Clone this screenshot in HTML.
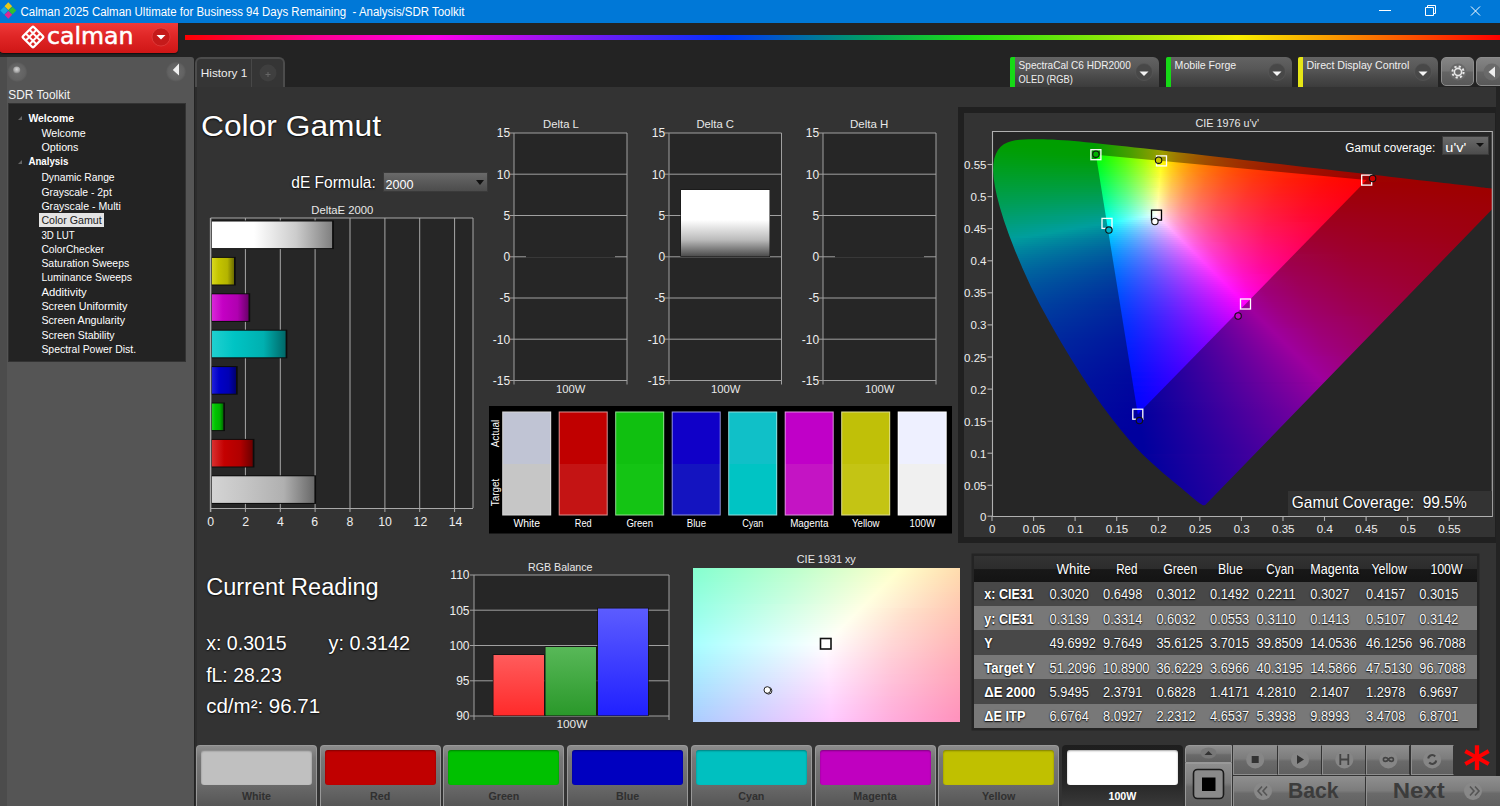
<!DOCTYPE html>
<html lang="en"><head><meta charset="utf-8"><title>Calman 2025 - Analysis/SDR Toolkit</title>
<style>
*{box-sizing:border-box;margin:0;padding:0}
html,body{width:1500px;height:806px;overflow:hidden;background:#222;font-family:"Liberation Sans","DejaVu Sans",sans-serif;color:#fff}
.a{position:absolute}
#root{position:relative;width:1500px;height:806px;overflow:hidden;background:#232323}
.t{position:absolute;white-space:nowrap;line-height:1}
svg{position:absolute;overflow:visible}
svg text{font-family:"Liberation Sans","DejaVu Sans",sans-serif}
.cn{display:inline-block;transform:scaleX(.86);transform-origin:0 50%}
.tc .cn{transform-origin:50% 50%}
.hv{text-shadow:0 0 1.5px #111,0 1px 1.5px #111}

</style></head>
<body>
<div id="root">
<div class="a" style="left:0;top:0;width:1500px;height:23px;background:#0078d7"></div>
<svg style="left:1.2px;top:2.800px" width="15.5" height="15.5" viewBox="0.500 0.500 17 17">
<rect x="5.5" y="1" width="6" height="6" transform="rotate(45 8.5 4)" fill="#e8c818"/>
<rect x="1" y="5.8" width="6" height="6" transform="rotate(45 4 8.8)" fill="#18a8e0"/>
<rect x="10" y="5.8" width="6" height="6" transform="rotate(45 13 8.8)" fill="#30c030"/>
<rect x="5.5" y="10.5" width="6" height="6" transform="rotate(45 8.5 13.5)" fill="#e02890"/>
</svg>
<svg style="left:1370px;top:0" width="130" height="23" viewBox="0 0 130 23" fill="none" stroke="#fff" stroke-width="1">
<path d="M9 10.5h12"/>
<path d="M55.5 7.5h8v8h-8z M57.5 7.5v-2h8v8h-2"/>
<path d="M101 6.500l9 9M110 6.500l-9 9"/>
</svg>
<div class="a" style="left:185px;top:35px;width:1315px;height:5px;background:linear-gradient(90deg,#f00 0%,#ff0090 10%,#ff00ea 19%,#0030ff 41%,#00a060 52%,#20e010 60%,#f8f000 80%,#f00 100%)"></div>
<div class="a" style="left:-2px;top:23px;width:180px;height:30px;border-radius:0 0 4px 6px;background:linear-gradient(180deg,#ee3a3a 0%,#e02626 45%,#cf1616 100%);box-shadow:0 1px 1px #111"></div>
<svg style="left:20px;top:24px" width="26" height="26" viewBox="0 0 26 26">
<g transform="translate(13 13) rotate(45)" fill="none" stroke="#fff" stroke-width="2.3">
<rect x="-7.6" y="-7.6" width="15.2" height="15.2" rx="1"/>
<path d="M-2.6 -7.6v15.2M2.6 -7.6v15.2M-7.6 -2.6h15.2M-7.6 2.6h15.2" stroke-width="1.9"/>
</g></svg>
<svg style="left:151px;top:27px" width="20" height="20" viewBox="0 0 20 20">
<circle cx="10" cy="10" r="9" fill="#c51a1a"/><circle cx="10" cy="10" r="9" fill="none" stroke="#e85050" stroke-opacity=".5"/>
<path d="M5.5 8h9l-4.5 4.6z" fill="#fff"/></svg>
<div class="a" style="left:0;top:57px;width:194px;height:749px;background:#555;border-radius:0 3px 0 0"></div>
<div class="a" style="left:0;top:57px;width:7px;height:749px;background:#4c4c4c"></div>
<svg style="left:0;top:57px" width="194" height="40" viewBox="0 57 194 40">
<defs><radialGradient id="kn" cx=".5" cy=".4" r=".6"><stop offset="0" stop-color="#d8d8d8"/><stop offset=".6" stop-color="#aaa"/><stop offset="1" stop-color="#777"/></radialGradient>
<radialGradient id="kr" cx=".5" cy=".5" r=".5"><stop offset="0" stop-color="#6c6c6c"/><stop offset=".8" stop-color="#626262"/><stop offset="1" stop-color="#575757"/></radialGradient></defs>
<circle cx="17.3" cy="72" r="10" fill="url(#kr)"/><circle cx="16.7" cy="70" r="3.6" fill="url(#kn)"/>
<circle cx="176" cy="71.7" r="10" fill="url(#kr)"/><path d="M179 63.5v12L172.800 70z" fill="#f0f0f0"/></svg>
<div class="a" style="left:8px;top:103px;width:178px;height:259px;background:#232323;border:1px solid #333"></div>
<div class="a" style="left:39px;top:213.0px;width:65px;height:14px;background:#e4e4e4"></div>
<div class="a" style="left:18px;top:116.0px;width:0;height:0;border-left:4px solid transparent;border-bottom:4px solid #666"></div>
<div class="a" style="left:18px;top:159.5px;width:0;height:0;border-left:4px solid transparent;border-bottom:4px solid #666"></div>
<div class="a" style="left:195px;top:57px;width:90px;height:32px;background:#353535;border:2px solid #4c4c4c;border-bottom:none;border-radius:6px 6px 0 0"></div>
<div class="a" style="left:251px;top:58px;width:1px;height:29px;background:#484848"></div>
<svg style="left:258px;top:63px" width="20" height="20" viewBox="0 0 20 20"><circle cx="10" cy="10" r="8.5" fill="#3f3f3f"/><path d="M7.5 11.5h5M10 9v5" stroke="#666" stroke-width="1"/></svg>
<div class="a" style="left:1010px;top:57px;width:149px;height:30px;border-radius:3px 6px 0 0;background:linear-gradient(180deg,#636363 0%,#575757 40%,#484848 70%,#3c3c3c 100%)"></div><div class="a" style="left:1010px;top:57px;width:5px;height:30px;background:#16d916;border-radius:2px 0 0 0"></div><svg style="left:1134px;top:62px" width="20" height="20" viewBox="0 0 20 20"><circle cx="10" cy="10" r="8.5" fill="#484848"/><circle cx="10" cy="10" r="8.5" fill="none" stroke="#5a5a5a" stroke-opacity=".6"/><path d="M5.5 9.5h9L10 14z" fill="#f4f4f4"/></svg>
<div class="a" style="left:1166px;top:57px;width:126px;height:30px;border-radius:3px 6px 0 0;background:linear-gradient(180deg,#636363 0%,#575757 40%,#484848 70%,#3c3c3c 100%)"></div><div class="a" style="left:1166px;top:57px;width:5px;height:30px;background:#16d916;border-radius:2px 0 0 0"></div><svg style="left:1267px;top:62px" width="20" height="20" viewBox="0 0 20 20"><circle cx="10" cy="10" r="8.5" fill="#484848"/><circle cx="10" cy="10" r="8.5" fill="none" stroke="#5a5a5a" stroke-opacity=".6"/><path d="M5.5 9.5h9L10 14z" fill="#f4f4f4"/></svg>
<div class="a" style="left:1298px;top:57px;width:140px;height:30px;border-radius:3px 6px 0 0;background:linear-gradient(180deg,#636363 0%,#575757 40%,#484848 70%,#3c3c3c 100%)"></div><div class="a" style="left:1298px;top:57px;width:5px;height:30px;background:#e6e616;border-radius:2px 0 0 0"></div><svg style="left:1413px;top:62px" width="20" height="20" viewBox="0 0 20 20"><circle cx="10" cy="10" r="8.5" fill="#484848"/><circle cx="10" cy="10" r="8.5" fill="none" stroke="#5a5a5a" stroke-opacity=".6"/><path d="M5.5 9.5h9L10 14z" fill="#f4f4f4"/></svg>
<div class="a" style="left:1441px;top:57px;width:33px;height:29px;border-radius:5px;border:1px solid #8c8c8c;background:linear-gradient(180deg,#858585 0%,#747474 48%,#646464 52%,#585858 100%)"></div>
<svg style="left:1448px;top:62px" width="20" height="20" viewBox="0 0 20 20"><circle cx="10" cy="10" r="8.5" fill="#6a6a6a"/>
<g fill="none" stroke="#e8e8e8"><circle cx="10" cy="10" r="3.6" stroke-width="1.6"/><circle cx="10" cy="10" r="5.6" stroke-width="2" stroke-dasharray="2.2 2.2"/></g></svg>
<div class="a" style="left:1476px;top:57px;width:33px;height:29px;border-radius:5px;border:1px solid #8c8c8c;background:linear-gradient(180deg,#858585 0%,#747474 48%,#646464 52%,#585858 100%)"></div>
<svg style="left:1482px;top:62px" width="20" height="20" viewBox="0 0 20 20"><circle cx="10" cy="10" r="8.5" fill="#6a6a6a"/><path d="M13 4.5v11L6.5 10z" fill="#eee"/></svg>
<div class="a" style="left:195px;top:87px;width:1301px;height:653px;background:#333"></div>
<div class="a" style="left:195px;top:87px;width:2px;height:653px;background:#2c2c2c"></div>
<svg style="left:0;top:0" width="1500" height="806" viewBox="0 0 1500 806"><text x="20.5" y="15.5" font-size="12" fill="#fff" textLength="444.0" lengthAdjust="spacingAndGlyphs" xml:space="preserve">Calman 2025 Calman Ultimate for Business 94 Days Remaining  - Analysis/SDR Toolkit</text><text x="47.0" y="43.8" font-size="22.5" fill="#fff" textLength="86.5" lengthAdjust="spacingAndGlyphs" style="font-family:'DejaVu Sans','Liberation Sans',sans-serif" stroke="#fff" stroke-width="0.5">calman</text><text x="8.3" y="99.2" font-size="12" fill="#f4f4f4" textLength="61.7" lengthAdjust="spacingAndGlyphs">SDR Toolkit</text><text x="28.4" y="121.8" font-size="10.8" fill="#fff" font-weight="bold" textLength="45.6" lengthAdjust="spacingAndGlyphs">Welcome</text><text x="41.4" y="137.3" font-size="10.8" fill="#fff" textLength="44.4" lengthAdjust="spacingAndGlyphs">Welcome</text><text x="41.4" y="151.3" font-size="10.8" fill="#fff" textLength="37.1" lengthAdjust="spacingAndGlyphs">Options</text><text x="28.4" y="165.3" font-size="10.8" fill="#fff" font-weight="bold" textLength="40.0" lengthAdjust="spacingAndGlyphs">Analysis</text><text x="41.4" y="181.3" font-size="10.8" fill="#fff" textLength="73.2" lengthAdjust="spacingAndGlyphs">Dynamic Range</text><text x="41.4" y="195.8" font-size="10.8" fill="#fff" textLength="70.4" lengthAdjust="spacingAndGlyphs">Grayscale - 2pt</text><text x="41.4" y="209.8" font-size="10.8" fill="#fff" textLength="79.4" lengthAdjust="spacingAndGlyphs">Grayscale - Multi</text><text x="41.4" y="223.8" font-size="10.8" fill="#222" textLength="60.3" lengthAdjust="spacingAndGlyphs">Color Gamut</text><text x="41.4" y="238.8" font-size="10.8" fill="#fff" textLength="33.3" lengthAdjust="spacingAndGlyphs">3D LUT</text><text x="41.4" y="252.8" font-size="10.8" fill="#fff" textLength="62.8" lengthAdjust="spacingAndGlyphs">ColorChecker</text><text x="41.4" y="267.3" font-size="10.8" fill="#fff" textLength="87.8" lengthAdjust="spacingAndGlyphs">Saturation Sweeps</text><text x="41.4" y="281.3" font-size="10.8" fill="#fff" textLength="90.5" lengthAdjust="spacingAndGlyphs">Luminance Sweeps</text><text x="41.4" y="295.8" font-size="10.8" fill="#fff" textLength="45.4" lengthAdjust="spacingAndGlyphs">Additivity</text><text x="41.4" y="309.8" font-size="10.8" fill="#fff" textLength="86.0" lengthAdjust="spacingAndGlyphs">Screen Uniformity</text><text x="41.4" y="324.3" font-size="10.8" fill="#fff" textLength="83.6" lengthAdjust="spacingAndGlyphs">Screen Angularity</text><text x="41.4" y="338.8" font-size="10.8" fill="#fff" textLength="73.2" lengthAdjust="spacingAndGlyphs">Screen Stability</text><text x="41.4" y="353.3" font-size="10.8" fill="#fff" textLength="94.7" lengthAdjust="spacingAndGlyphs">Spectral Power Dist.</text><text x="200.8" y="76.5" font-size="11.5" fill="#eee" textLength="46.5" lengthAdjust="spacingAndGlyphs">History 1</text><text x="1018.6" y="68.6" font-size="10.5" fill="#f0f0f0" textLength="112.2" lengthAdjust="spacingAndGlyphs">SpectraCal C6 HDR2000</text><text x="1018.6" y="83.2" font-size="10.5" fill="#f0f0f0" textLength="54.2" lengthAdjust="spacingAndGlyphs">OLED (RGB)</text><text x="1174.6" y="68.6" font-size="10.5" fill="#f0f0f0" textLength="61.6" lengthAdjust="spacingAndGlyphs">Mobile Forge</text><text x="1306.6" y="68.6" font-size="10.5" fill="#f0f0f0" textLength="102.7" lengthAdjust="spacingAndGlyphs">Direct Display Control</text></svg><div class="a" style="left:383px;top:172px;width:105px;height:20px;background:linear-gradient(180deg,#6a6a6a 0%,#5a5a5a 50%,#4c4c4c 100%);border:1px solid #3a3a3a"></div>
<div class="a" style="left:476px;top:180px;width:0;height:0;border-left:4px solid transparent;border-right:4px solid transparent;border-top:5px solid #111"></div>
<svg style="left:0;top:0" width="1500" height="806" viewBox="0 0 1500 806"><defs><linearGradient id="bw" x1="0" y1="0" x2="1" y2="0"><stop offset="0" stop-color="#fff"/><stop offset="0.35" stop-color="#fff"/><stop offset="0.7" stop-color="#ccc"/><stop offset="1" stop-color="#808080"/></linearGradient><linearGradient id="by" x1="0" y1="0" x2="1" y2="0"><stop offset="0" stop-color="#d8d820"/><stop offset="0.3" stop-color="#c4c400"/><stop offset="0.7" stop-color="#b4b400"/><stop offset="1" stop-color="#6c6c00"/></linearGradient><linearGradient id="bm" x1="0" y1="0" x2="1" y2="0"><stop offset="0" stop-color="#d828d8"/><stop offset="0.3" stop-color="#c400c4"/><stop offset="0.7" stop-color="#b000b0"/><stop offset="1" stop-color="#6a006a"/></linearGradient><linearGradient id="bc" x1="0" y1="0" x2="1" y2="0"><stop offset="0" stop-color="#20d0d0"/><stop offset="0.3" stop-color="#00c4c4"/><stop offset="0.7" stop-color="#00b0b0"/><stop offset="1" stop-color="#006868"/></linearGradient><linearGradient id="bb" x1="0" y1="0" x2="1" y2="0"><stop offset="0" stop-color="#2020d8"/><stop offset="0.3" stop-color="#0000c8"/><stop offset="0.7" stop-color="#0000b4"/><stop offset="1" stop-color="#00006c"/></linearGradient><linearGradient id="bg" x1="0" y1="0" x2="1" y2="0"><stop offset="0" stop-color="#20d020"/><stop offset="0.3" stop-color="#00c400"/><stop offset="0.7" stop-color="#00b000"/><stop offset="1" stop-color="#006c00"/></linearGradient><linearGradient id="br" x1="0" y1="0" x2="1" y2="0"><stop offset="0" stop-color="#d83030"/><stop offset="0.3" stop-color="#c40000"/><stop offset="0.7" stop-color="#b00000"/><stop offset="1" stop-color="#6c0000"/></linearGradient><linearGradient id="bgr" x1="0" y1="0" x2="1" y2="0"><stop offset="0" stop-color="#d4d4d4"/><stop offset="0.3" stop-color="#c6c6c6"/><stop offset="0.7" stop-color="#b0b0b0"/><stop offset="1" stop-color="#686868"/></linearGradient><linearGradient id="dc" x1="0" y1="0" x2="0" y2="1"><stop offset="0" stop-color="#fff"/><stop offset="0.45" stop-color="#fff"/><stop offset="0.75" stop-color="#bbb"/><stop offset="1" stop-color="#4a4a4a"/></linearGradient><linearGradient id="rr" x1="0" y1="0" x2="0" y2="1"><stop offset="0" stop-color="#ff5c5c"/><stop offset="1" stop-color="#ff2a2a"/></linearGradient><linearGradient id="rg" x1="0" y1="0" x2="0" y2="1"><stop offset="0" stop-color="#58b858"/><stop offset="1" stop-color="#2a982a"/></linearGradient><linearGradient id="rb" x1="0" y1="0" x2="0" y2="1"><stop offset="0" stop-color="#5c5cff"/><stop offset="1" stop-color="#2020ff"/></linearGradient></defs><rect x="210.6" y="218" width="262.4" height="290" fill="#262626"/><path d="M210.6 218 V512" stroke="#a8a8a8" stroke-width="1.5"/><path d="M245.4 218 V512" stroke="#a8a8a8" stroke-width="1"/><path d="M280.3 218 V512" stroke="#a8a8a8" stroke-width="1"/><path d="M315.1 218 V512" stroke="#a8a8a8" stroke-width="1"/><path d="M350.0 218 V512" stroke="#a8a8a8" stroke-width="1"/><path d="M384.9 218 V512" stroke="#a8a8a8" stroke-width="1"/><path d="M419.7 218 V512" stroke="#a8a8a8" stroke-width="1"/><path d="M454.6 218 V512" stroke="#a8a8a8" stroke-width="1"/><path d="M473.0 218V508" stroke="#a8a8a8" stroke-width="1"/><path d="M210.6 218.0H473" stroke="#a8a8a8" stroke-width="1"/><path d="M210.6 508.5H473" stroke="#a8a8a8" stroke-width="1"/><rect x="211.8" y="220.5" width="122.0" height="28.6" fill="#0c0c0c" /><rect x="211.9" y="221.5" width="120.2" height="26.6" fill="url(#bw)"/><rect x="211.8" y="256.9" width="23.9" height="28.6" fill="#0c0c0c" /><rect x="211.9" y="257.9" width="22.1" height="26.6" fill="url(#by)"/><rect x="211.8" y="293.3" width="38.4" height="28.6" fill="#0c0c0c" /><rect x="211.9" y="294.3" width="36.6" height="26.6" fill="url(#bm)"/><rect x="211.8" y="329.7" width="75.5" height="28.6" fill="#0c0c0c" /><rect x="211.9" y="330.7" width="73.7" height="26.6" fill="url(#bc)"/><rect x="211.8" y="366.1" width="25.9" height="28.6" fill="#0c0c0c" /><rect x="211.9" y="367.1" width="24.1" height="26.6" fill="url(#bb)"/><rect x="211.8" y="402.5" width="13.2" height="28.6" fill="#0c0c0c" /><rect x="211.9" y="403.5" width="11.4" height="26.6" fill="url(#bg)"/><rect x="211.8" y="438.9" width="42.6" height="28.6" fill="#0c0c0c" /><rect x="211.9" y="439.9" width="40.8" height="26.6" fill="url(#br)"/><rect x="211.8" y="475.3" width="104.3" height="28.6" fill="#0c0c0c" /><rect x="211.9" y="476.3" width="102.5" height="26.6" fill="url(#bgr)"/><rect x="514.0" y="133.0" width="113.0" height="247.5" fill="#262626"/><path d="M510.0 133.0H627.0" stroke="#a0a0a0" stroke-width="1"/><path d="M510.0 174.2H627.0" stroke="#a0a0a0" stroke-width="1"/><path d="M510.0 215.5H627.0" stroke="#a0a0a0" stroke-width="1"/><path d="M510.0 256.8H627.0" stroke="#a0a0a0" stroke-width="1"/><path d="M510.0 298.0H627.0" stroke="#a0a0a0" stroke-width="1"/><path d="M510.0 339.2H627.0" stroke="#a0a0a0" stroke-width="1"/><path d="M510.0 380.5H627.0" stroke="#a0a0a0" stroke-width="1"/><path d="M514.0 133.0V384.5 M627.0 133.0V384.5" stroke="#a0a0a0" stroke-width="1"/><rect x="526.0" y="256" width="89.0" height="1.5" fill="#262626"/><rect x="669.0" y="133.0" width="112.5" height="247.5" fill="#262626"/><path d="M665.0 133.0H781.5" stroke="#a0a0a0" stroke-width="1"/><path d="M665.0 174.2H781.5" stroke="#a0a0a0" stroke-width="1"/><path d="M665.0 215.5H781.5" stroke="#a0a0a0" stroke-width="1"/><path d="M665.0 256.8H781.5" stroke="#a0a0a0" stroke-width="1"/><path d="M665.0 298.0H781.5" stroke="#a0a0a0" stroke-width="1"/><path d="M665.0 339.2H781.5" stroke="#a0a0a0" stroke-width="1"/><path d="M665.0 380.5H781.5" stroke="#a0a0a0" stroke-width="1"/><path d="M669.0 133.0V384.5 M781.5 133.0V384.5" stroke="#a0a0a0" stroke-width="1"/><rect x="680.5" y="189.5" width="89.5" height="67.5" fill="#111"/><rect x="681" y="190" width="88.5" height="66.5" fill="url(#dc)"/><rect x="823.0" y="133.0" width="113.0" height="247.5" fill="#262626"/><path d="M819.0 133.0H936.0" stroke="#a0a0a0" stroke-width="1"/><path d="M819.0 174.2H936.0" stroke="#a0a0a0" stroke-width="1"/><path d="M819.0 215.5H936.0" stroke="#a0a0a0" stroke-width="1"/><path d="M819.0 256.8H936.0" stroke="#a0a0a0" stroke-width="1"/><path d="M819.0 298.0H936.0" stroke="#a0a0a0" stroke-width="1"/><path d="M819.0 339.2H936.0" stroke="#a0a0a0" stroke-width="1"/><path d="M819.0 380.5H936.0" stroke="#a0a0a0" stroke-width="1"/><path d="M823.0 133.0V384.5 M936.0 133.0V384.5" stroke="#a0a0a0" stroke-width="1"/><rect x="835.0" y="256" width="89.0" height="1.5" fill="#262626"/><rect x="489" y="406" width="463" height="127.5" fill="#000"/><rect x="502.2" y="411.5" width="49" height="104" fill="#d8d8d8"/><rect x="503.2" y="412.5" width="47" height="51.5" fill="#c0c4d4"/><rect x="503.2" y="464" width="47" height="50.5" fill="#c6c6c6"/><rect x="558.7" y="411.5" width="49" height="104" fill="#e09090"/><rect x="559.7" y="412.5" width="47" height="51.5" fill="#c00000"/><rect x="559.7" y="464" width="47" height="50.5" fill="#c41414"/><rect x="615.2" y="411.5" width="49" height="104" fill="#90e090"/><rect x="616.2" y="412.5" width="47" height="51.5" fill="#10c010"/><rect x="616.2" y="464" width="47" height="50.5" fill="#14c414"/><rect x="671.7" y="411.5" width="49" height="104" fill="#9090e0"/><rect x="672.7" y="412.5" width="47" height="51.5" fill="#1000c8"/><rect x="672.7" y="464" width="47" height="50.5" fill="#1414c0"/><rect x="728.2" y="411.5" width="49" height="104" fill="#90e0e0"/><rect x="729.2" y="412.5" width="47" height="51.5" fill="#10c0c8"/><rect x="729.2" y="464" width="47" height="50.5" fill="#00c4c4"/><rect x="784.7" y="411.5" width="49" height="104" fill="#e090e0"/><rect x="785.7" y="412.5" width="47" height="51.5" fill="#c000c8"/><rect x="785.7" y="464" width="47" height="50.5" fill="#c414c4"/><rect x="841.2" y="411.5" width="49" height="104" fill="#e0e090"/><rect x="842.2" y="412.5" width="47" height="51.5" fill="#c0c008"/><rect x="842.2" y="464" width="47" height="50.5" fill="#c4c414"/><rect x="897.7" y="411.5" width="49" height="104" fill="#fff"/><rect x="898.7" y="412.5" width="47" height="51.5" fill="#eef0ff"/><rect x="898.7" y="464" width="47" height="50.5" fill="#f0f0f0"/><rect x="474" y="575" width="195" height="141" fill="#262626"/><path d="M470.0 575.0H669.0" stroke="#a0a0a0" stroke-width="1"/><path d="M470.0 610.2H669.0" stroke="#a0a0a0" stroke-width="1"/><path d="M470.0 645.5H669.0" stroke="#a0a0a0" stroke-width="1"/><path d="M470.0 680.8H669.0" stroke="#a0a0a0" stroke-width="1"/><path d="M470.0 716.0H669.0" stroke="#a0a0a0" stroke-width="1"/><path d="M474.0 575.0V720.0 M669.0 575.0V720.0" stroke="#a0a0a0" stroke-width="1"/><rect x="492.8" y="654.3" width="51.9" height="61.7" fill="#111"/><rect x="493.5" y="655.0" width="50.5" height="60.5" fill="url(#rr)"/><rect x="544.8" y="646.3" width="51.9" height="69.7" fill="#111"/><rect x="545.5" y="647.0" width="50.5" height="68.5" fill="url(#rg)"/><rect x="597.3" y="607.8" width="51.4" height="108.2" fill="#111"/><rect x="598.0" y="608.5" width="50.0" height="107.0" fill="url(#rb)"/></svg>
<svg style="left:0;top:0" width="1500" height="806" viewBox="0 0 1500 806"><text x="201.0" y="135.6" font-size="29" fill="#fff" textLength="180.0" lengthAdjust="spacingAndGlyphs" class="hv">Color Gamut</text><text x="291.3" y="187.8" font-size="15.6" fill="#fff" textLength="84.5" lengthAdjust="spacingAndGlyphs" class="hv">dE Formula:</text><text x="385.6" y="189.3" font-size="13.3" fill="#fff" textLength="28.0" lengthAdjust="spacingAndGlyphs">2000</text><text x="210.6" y="526.4" font-size="12.3" fill="#eee" text-anchor="middle">0</text><text x="245.7" y="526.4" font-size="12.3" fill="#eee" text-anchor="middle">2</text><text x="280.5" y="526.4" font-size="12.3" fill="#eee" text-anchor="middle">4</text><text x="314.7" y="526.4" font-size="12.3" fill="#eee" text-anchor="middle">6</text><text x="349.9" y="526.4" font-size="12.3" fill="#eee" text-anchor="middle">8</text><text x="385.0" y="526.4" font-size="12.3" fill="#eee" text-anchor="middle">10</text><text x="420.4" y="526.4" font-size="12.3" fill="#eee" text-anchor="middle">12</text><text x="455.5" y="526.4" font-size="12.3" fill="#eee" text-anchor="middle">14</text><text x="311.3" y="214.0" font-size="11.3" fill="#e8e8e8" textLength="62.0" lengthAdjust="spacingAndGlyphs">DeltaE 2000</text><text x="510.2" y="137.3" font-size="12" fill="#eee" text-anchor="end">15</text><text x="510.2" y="178.6" font-size="12" fill="#eee" text-anchor="end">10</text><text x="510.2" y="219.8" font-size="12" fill="#eee" text-anchor="end">5</text><text x="510.2" y="261.1" font-size="12" fill="#eee" text-anchor="end">0</text><text x="510.2" y="302.3" font-size="12" fill="#eee" text-anchor="end">-5</text><text x="510.2" y="343.6" font-size="12" fill="#eee" text-anchor="end">-10</text><text x="510.2" y="384.8" font-size="12" fill="#eee" text-anchor="end">-15</text><text x="543.1" y="128.4" font-size="11" fill="#e8e8e8" textLength="35.8" lengthAdjust="spacingAndGlyphs">Delta L</text><text x="556.1" y="393.4" font-size="11" fill="#e8e8e8" textLength="29.4" lengthAdjust="spacingAndGlyphs">100W</text><text x="665.2" y="137.3" font-size="12" fill="#eee" text-anchor="end">15</text><text x="665.2" y="178.6" font-size="12" fill="#eee" text-anchor="end">10</text><text x="665.2" y="219.8" font-size="12" fill="#eee" text-anchor="end">5</text><text x="665.2" y="261.1" font-size="12" fill="#eee" text-anchor="end">0</text><text x="665.2" y="302.3" font-size="12" fill="#eee" text-anchor="end">-5</text><text x="665.2" y="343.6" font-size="12" fill="#eee" text-anchor="end">-10</text><text x="665.2" y="384.8" font-size="12" fill="#eee" text-anchor="end">-15</text><text x="696.4" y="128.4" font-size="11" fill="#e8e8e8" textLength="37.6" lengthAdjust="spacingAndGlyphs">Delta C</text><text x="710.9" y="393.4" font-size="11" fill="#e8e8e8" textLength="29.4" lengthAdjust="spacingAndGlyphs">100W</text><text x="819.2" y="137.3" font-size="12" fill="#eee" text-anchor="end">15</text><text x="819.2" y="178.6" font-size="12" fill="#eee" text-anchor="end">10</text><text x="819.2" y="219.8" font-size="12" fill="#eee" text-anchor="end">5</text><text x="819.2" y="261.1" font-size="12" fill="#eee" text-anchor="end">0</text><text x="819.2" y="302.3" font-size="12" fill="#eee" text-anchor="end">-5</text><text x="819.2" y="343.6" font-size="12" fill="#eee" text-anchor="end">-10</text><text x="819.2" y="384.8" font-size="12" fill="#eee" text-anchor="end">-15</text><text x="850.0" y="128.4" font-size="11" fill="#e8e8e8" textLength="38.4" lengthAdjust="spacingAndGlyphs">Delta H</text><text x="865.1" y="393.4" font-size="11" fill="#e8e8e8" textLength="29.4" lengthAdjust="spacingAndGlyphs">100W</text><text x="513.4" y="526.8" font-size="10.6" fill="#fff" textLength="26.6" lengthAdjust="spacingAndGlyphs">White</text><text x="574.8" y="526.8" font-size="10.6" fill="#fff" textLength="16.8" lengthAdjust="spacingAndGlyphs">Red</text><text x="626.4" y="526.8" font-size="10.6" fill="#fff" textLength="26.6" lengthAdjust="spacingAndGlyphs">Green</text><text x="686.8" y="526.8" font-size="10.6" fill="#fff" textLength="19.3" lengthAdjust="spacingAndGlyphs">Blue</text><text x="742.2" y="526.8" font-size="10.6" fill="#fff" textLength="21.2" lengthAdjust="spacingAndGlyphs">Cyan</text><text x="790.2" y="526.8" font-size="10.6" fill="#fff" textLength="38.2" lengthAdjust="spacingAndGlyphs">Magenta</text><text x="852.0" y="526.8" font-size="10.6" fill="#fff" textLength="27.6" lengthAdjust="spacingAndGlyphs">Yellow</text><text x="909.6" y="526.8" font-size="10.6" fill="#fff" textLength="25.6" lengthAdjust="spacingAndGlyphs">100W</text><text x="0.0" y="0.0" font-size="10.6" fill="#fff" text-anchor="middle" textLength="27.5" lengthAdjust="spacingAndGlyphs" transform="translate(499 433.5) rotate(-90)">Actual</text><text x="0.0" y="0.0" font-size="10.6" fill="#fff" text-anchor="middle" textLength="27.5" lengthAdjust="spacingAndGlyphs" transform="translate(499 492.5) rotate(-90)">Target</text><text x="469.5" y="579.3" font-size="12" fill="#eee" text-anchor="end">110</text><text x="469.5" y="614.5" font-size="12" fill="#eee" text-anchor="end">105</text><text x="469.5" y="649.8" font-size="12" fill="#eee" text-anchor="end">100</text><text x="469.5" y="685.0" font-size="12" fill="#eee" text-anchor="end">95</text><text x="469.5" y="720.3" font-size="12" fill="#eee" text-anchor="end">90</text><text x="528.0" y="570.7" font-size="11.2" fill="#e8e8e8" textLength="64.5" lengthAdjust="spacingAndGlyphs">RGB Balance</text><text x="556.4" y="727.7" font-size="11.2" fill="#e8e8e8" textLength="31.0" lengthAdjust="spacingAndGlyphs">100W</text><text x="206.2" y="595.0" font-size="23" fill="#fff" textLength="172.5" lengthAdjust="spacingAndGlyphs" class="hv">Current Reading</text><text x="206.2" y="650.0" font-size="19.8" fill="#fff" textLength="80.5" lengthAdjust="spacingAndGlyphs" class="hv">x: 0.3015</text><text x="328.5" y="650.0" font-size="19.8" fill="#fff" textLength="81.5" lengthAdjust="spacingAndGlyphs" class="hv">y: 0.3142</text><text x="206.2" y="682.3" font-size="19.8" fill="#fff" textLength="75.5" lengthAdjust="spacingAndGlyphs" class="hv">fL: 28.23</text><text x="206.2" y="713.3" font-size="19.8" fill="#fff" textLength="114.0" lengthAdjust="spacingAndGlyphs" class="hv">cd/m²: 96.71</text></svg><div class="a" style="left:958px;top:107px;width:538px;height:436px;background:#202020"></div>
<div class="a" style="left:964px;top:113px;width:531px;height:424px;background:#333"></div>
<div class="a" style="left:992px;top:131px;width:500px;height:386px;background:#262626"></div>
<div class="a" style="left:0;top:0;width:1492px;height:516px;overflow:hidden;clip-path:polygon(1205.5px 504.8px,1205.5px 504.8px,1205.4px 504.8px,1205.3px 504.8px,1205.3px 504.9px,1205.1px 504.9px,1205.0px 504.9px,1204.9px 504.9px,1204.8px 505.0px,1204.7px 505.1px,1204.6px 505.2px,1204.5px 505.2px,1204.3px 505.2px,1204.1px 505.2px,1203.8px 505.2px,1203.6px 505.2px,1203.3px 505.2px,1203.0px 505.2px,1202.7px 505.1px,1202.3px 504.9px,1201.7px 504.6px,1200.9px 504.1px,1200.0px 503.5px,1199.0px 502.8px,1197.9px 501.9px,1196.6px 500.9px,1195.1px 499.7px,1193.3px 498.3px,1191.5px 496.8px,1189.4px 495.0px,1187.1px 493.0px,1184.7px 490.9px,1181.9px 488.6px,1178.8px 486.1px,1175.4px 483.3px,1171.7px 480.2px,1167.6px 476.8px,1163.3px 473.2px,1158.6px 469.1px,1153.5px 464.6px,1148.0px 459.5px,1142.2px 453.9px,1135.9px 447.4px,1128.8px 439.5px,1120.7px 429.8px,1111.8px 418.6px,1102.4px 406.0px,1092.5px 391.9px,1082.1px 376.3px,1071.5px 359.5px,1060.8px 341.7px,1050.3px 323.5px,1040.1px 304.9px,1030.8px 286.5px,1022.6px 268.5px,1015.4px 251.4px,1009.2px 235.4px,1004.0px 220.8px,1000.0px 207.8px,997.0px 196.4px,994.9px 186.4px,993.6px 177.8px,993.1px 170.4px,993.4px 164.1px,994.3px 158.5px,995.9px 153.9px,998.0px 149.9px,1000.7px 146.8px,1003.8px 144.3px,1007.4px 142.5px,1011.2px 141.2px,1015.3px 140.3px,1019.7px 139.8px,1024.2px 139.4px,1028.9px 139.2px,1033.6px 139.2px,1038.3px 139.2px,1043.1px 139.3px,1047.9px 139.4px,1052.8px 139.6px,1057.9px 139.9px,1063.1px 140.2px,1068.4px 140.6px,1074.0px 141.1px,1079.7px 141.6px,1085.7px 142.2px,1091.9px 142.8px,1098.3px 143.4px,1105.0px 144.2px,1112.0px 144.9px,1119.3px 145.7px,1126.9px 146.5px,1134.7px 147.4px,1143.0px 148.3px,1151.5px 149.3px,1160.4px 150.3px,1169.6px 151.4px,1179.2px 152.5px,1189.2px 153.6px,1199.5px 154.8px,1210.1px 156.0px,1221.0px 157.3px,1232.3px 158.6px,1243.8px 159.9px,1255.6px 161.3px,1267.6px 162.7px,1279.7px 164.1px,1291.9px 165.5px,1304.0px 166.9px,1315.8px 168.2px,1327.4px 169.6px,1339.1px 170.9px,1350.5px 172.2px,1361.5px 173.5px,1372.0px 174.7px,1382.0px 175.8px,1391.5px 176.9px,1400.6px 178.0px,1409.1px 179.0px,1417.0px 179.9px,1424.5px 180.7px,1431.4px 181.5px,1437.8px 182.3px,1443.8px 183.0px,1449.4px 183.6px,1454.6px 184.2px,1459.6px 184.8px,1464.3px 185.3px,1468.7px 185.8px,1472.8px 186.3px,1476.7px 186.8px,1480.2px 187.2px,1481.9px 187.4px,1483.4px 187.5px,1484.9px 187.7px,1486.3px 187.9px,1487.7px 188.0px,1488.9px 188.2px,1490.1px 188.3px,1491.2px 188.4px,1492.2px 188.6px,1492.4px 188.6px,1492.4px 209.0px)">
<div class="a" style="left:1014px;top:138px;width:48px;height:2px;background:linear-gradient(90deg,#009e00 0.5px,#009e00 47.5px)"></div>
<div class="a" style="left:1006px;top:140px;width:81px;height:2px;background:linear-gradient(90deg,#009e00 0.5px,#009e00 80.5px)"></div>
<div class="a" style="left:1001px;top:142px;width:106px;height:2px;background:linear-gradient(90deg,#009e00 0.5px,#009e00 92.5px,#179e00 105.5px)"></div>
<div class="a" style="left:999px;top:144px;width:126px;height:2px;background:linear-gradient(90deg,#009e00 0.5px,#009e00 95.5px,#3c9e00 125.5px)"></div>
<div class="a" style="left:997px;top:146px;width:146px;height:2px;background:linear-gradient(90deg,#009e02 0.5px,#009e00 97.5px,#319e00 122.5px,#669e00 145.5px)"></div>
<div class="a" style="left:995px;top:148px;width:166px;height:2px;background:linear-gradient(90deg,#009e05 0.5px,#009e00 99.5px,#449e00 133.5px,#989e00 165.5px)"></div>
<div class="a" style="left:994px;top:150px;width:184px;height:2px;background:linear-gradient(90deg,#009e07 0.5px,#009e00 101.5px,#4b9e00 137.5px,#9e9e00 168.5px,#9e7900 183.5px)"></div>
<div class="a" style="left:993px;top:152px;width:202px;height:2px;background:linear-gradient(90deg,#009e0a 0.5px,#009e00 102.5px,#499e00 137.5px,#9e9d00 169.5px,#9e7a00 183.5px,#9e5c00 201.5px)"></div>
<div class="a" style="left:992px;top:154px;width:221px;height:2px;background:linear-gradient(90deg,#009e0d 0.5px,#009e01 103.5px,#469e00 137.5px,#9e9d00 170.5px,#9e8200 180.5px,#9e6b00 192.5px,#9e4600 220.5px)"></div>
<div class="a" style="left:992px;top:156px;width:238px;height:2px;background:linear-gradient(90deg,#009e0f 0.5px,#009e04 104.5px,#4b9e00 139.5px,#9d9e00 169.5px,#9e7b00 183.5px,#9e6000 198.5px,#9e4a00 216.5px,#9e3700 237.5px)"></div>
<div class="a" style="left:992px;top:158px;width:255px;height:2px;background:linear-gradient(90deg,#009e12 0.5px,#009e07 104.5px,#489e02 138.5px,#9d9e00 169.5px,#9e7600 185.5px,#9e5800 203.5px,#9e3f00 226.5px,#9e2b00 254.5px)"></div>
<div class="a" style="left:992px;top:160px;width:273px;height:2px;background:linear-gradient(90deg,#009e15 0.5px,#009e0b 104.5px,#489e06 138.5px,#9e9e00 169.5px,#9e7400 186.5px,#9e5100 208.5px,#9e3600 236.5px,#9e2100 272.5px)"></div>
<div class="a" style="left:992px;top:162px;width:290px;height:2px;background:linear-gradient(90deg,#009e17 0.5px,#009e0e 105.5px,#489e0a 138.5px,#9b9e05 168.5px,#9e6d00 189.5px,#9e4a00 214.5px,#9e2e00 247.5px,#9e1900 289.5px)"></div>
<div class="a" style="left:992px;top:164px;width:307px;height:2px;background:linear-gradient(90deg,#009e1a 0.5px,#009e12 105.5px,#489e0e 138.5px,#9c9e0a 168.5px,#9e6b04 190.5px,#9e4500 218.5px,#9e2800 256.5px,#9e1300 306.5px)"></div>
<div class="a" style="left:992px;top:166px;width:325px;height:2px;background:linear-gradient(90deg,#009e1d 0.5px,#009e16 105.5px,#459e13 137.5px,#9e9c0e 169.5px,#9e7f0a 180.5px,#9e6707 192.5px,#9e4001 223.5px,#9e2200 266.5px,#9e0d00 324.5px)"></div>
<div class="a" style="left:992px;top:168px;width:342px;height:2px;background:linear-gradient(90deg,#009e20 0.5px,#019e1a 106.5px,#489e17 138.5px,#9e9c13 169.5px,#9e7e0e 180.5px,#9e630a 194.5px,#9e4d06 210.5px,#9e3b03 228.5px,#9e1e00 275.5px,#9e0900 341.5px)"></div>
<div class="a" style="left:992px;top:170px;width:359px;height:2px;background:linear-gradient(90deg,#009e22 0.5px,#009e1d 106.5px,#4a9e1b 139.5px,#9e9e18 168.5px,#9e7d12 180.5px,#9e620d 194.5px,#9e4b09 211.5px,#9e3805 231.5px,#9e1a00 283.5px,#9e0500 358.5px)"></div>
<div class="a" style="left:992px;top:172px;width:377px;height:2px;background:linear-gradient(90deg,#009e25 0.5px,#009e21 106.5px,#479e1f 138.5px,#9e9e1d 168.5px,#9e7d16 180.5px,#9e6010 195.5px,#9e480b 213.5px,#9e3407 235.5px,#9e1600 293.5px,#9e0100 376.5px)"></div>
<div class="a" style="left:992px;top:174px;width:394px;height:2px;background:linear-gradient(90deg,#009e28 0.5px,#019e25 107.5px,#4a9e24 139.5px,#9e9d22 168.5px,#9e7a1a 181.5px,#9e5c13 197.5px,#9e440d 216.5px,#9e3008 240.5px,#9e1f04 270.5px,#9e1001 307.5px,#9e0000 393.5px)"></div>
<div class="a" style="left:992px;top:176px;width:412px;height:2px;background:linear-gradient(90deg,#009e2b 0.5px,#009e29 107.5px,#479e28 138.5px,#9e9d27 168.5px,#9e771d 182.5px,#9e5815 199.5px,#9e3f0f 220.5px,#9e2c0a 245.5px,#9e1a05 280.5px,#9e0b01 323.5px,#9e0000 377.5px,#9e0000 411.5px)"></div>
<div class="a" style="left:992px;top:178px;width:429px;height:2px;background:linear-gradient(90deg,#009e2e 0.5px,#009e2d 107.5px,#449e2d 137.5px,#9e9c2c 168.5px,#9e7621 182.5px,#9e5618 200.5px,#9e3d11 222.5px,#9e280b 250.5px,#9e1505 290.5px,#9e0701 340.5px,#9e0000 375.5px,#9e0000 428.5px)"></div>
<div class="a" style="left:992px;top:180px;width:446px;height:2px;background:linear-gradient(90deg,#009e31 0.5px,#019e32 108.5px,#479e32 138.5px,#9e9b31 168.5px,#9e7325 183.5px,#9e531a 202.5px,#9e3912 226.5px,#9e250c 255.5px,#9e1106 300.5px,#9e0301 358.5px,#9e0000 445.5px)"></div>
<div class="a" style="left:992px;top:182px;width:464px;height:2px;background:linear-gradient(90deg,#009e34 0.5px,#009e36 108.5px,#499e37 139.5px,#9e9e37 167.5px,#9e7529 182.5px,#9e521e 202.5px,#9e3715 227.5px,#9e220d 258.5px,#9e0f07 307.5px,#9e0002 371.5px,#9e0000 463.5px)"></div>
<div class="a" style="left:992px;top:184px;width:481px;height:2px;background:linear-gradient(90deg,#009e37 0.5px,#009e3a 108.5px,#469e3b 138.5px,#9e9d3d 167.5px,#9e722d 183.5px,#9e5020 203.5px,#9e3516 229.5px,#9e200f 262.5px,#9e0e08 308.5px,#9e0003 369.5px,#9e0000 480.5px)"></div>
<div class="a" style="left:992px;top:186px;width:498px;height:2px;background:linear-gradient(90deg,#009e3a 0.5px,#019e3e 109.5px,#499e40 139.5px,#9e9d42 167.5px,#9e7131 183.5px,#9e4e23 204.5px,#9e3318 231.5px,#9e1d10 266.5px,#9e0d09 310.5px,#9e0004 367.5px,#9e0000 497.5px)"></div>
<div class="a" style="left:992px;top:188px;width:504px;height:2px;background:linear-gradient(90deg,#009e3d 0.5px,#009e43 109.5px,#469e45 138.5px,#9e9c48 167.5px,#9e6e34 184.5px,#9e4c26 205.5px,#9e311a 233.5px,#9e1c11 268.5px,#9e0c0b 311.5px,#9e0006 365.5px,#9e0000 503.5px)"></div>
<div class="a" style="left:993px;top:190px;width:503px;height:2px;background:linear-gradient(90deg,#009e40 0.5px,#009e47 108.5px,#439e4a 136.5px,#9e9b4d 166.5px,#9e6e38 183.5px,#9e4c29 204.5px,#9e301d 232.5px,#9e1b13 267.5px,#9e0c0c 309.5px,#9e0007 362.5px,#9e0000 502.5px)"></div>
<div class="a" style="left:993px;top:192px;width:503px;height:2px;background:linear-gradient(90deg,#009e44 0.5px,#019e4c 109.5px,#4b9e50 139.5px,#9e9e54 165.5px,#9e8548 173.5px,#9e6f3e 182.5px,#9e4c2d 203.5px,#9e3120 230.5px,#9e1c16 265.5px,#9e0c0e 307.5px,#9e0008 360.5px,#9e0000 502.5px)"></div>
<div class="a" style="left:993px;top:194px;width:503px;height:2px;background:linear-gradient(90deg,#009e47 0.5px,#009e51 109.5px,#489e55 138.5px,#9e9e5a 165.5px,#9e7043 181.5px,#9e4d31 202.5px,#9e3123 229.5px,#9e1b18 265.5px,#9e0c10 306.5px,#9e000a 358.5px,#9e0001 502.5px)"></div>
<div class="a" style="left:994px;top:196px;width:502px;height:2px;background:linear-gradient(90deg,#009e4a 0.5px,#009e56 108.5px,#489e5b 137.5px,#9e9d60 164.5px,#9e7047 180.5px,#9e4c34 201.5px,#9e3125 228.5px,#9e1b19 264.5px,#9e0c11 305.5px,#9e000b 356.5px,#9e0002 501.5px)"></div>
<div class="a" style="left:994px;top:198px;width:502px;height:2px;background:linear-gradient(90deg,#009e4d 0.5px,#009e5a 108.5px,#459e60 136.5px,#9e9c66 164.5px,#9e6f4c 180.5px,#9e4b37 201.5px,#9e3028 228.5px,#9e1a1b 264.5px,#9e0c13 304.5px,#9e000c 354.5px,#9e0003 501.5px)"></div>
<div class="a" style="left:995px;top:200px;width:501px;height:2px;background:linear-gradient(90deg,#009e51 0.5px,#009e5f 108.5px,#459e65 135.5px,#9e9b6c 163.5px,#9e6e50 179.5px,#9e4b3b 200.5px,#9e2f2a 227.5px,#9e1a1d 263.5px,#9e000e 351.5px,#9e0003 500.5px)"></div>
<div class="a" style="left:995px;top:202px;width:501px;height:2px;background:linear-gradient(90deg,#009e54 0.5px,#009e64 108.5px,#459e6b 135.5px,#709e6f 149.5px,#9e9e74 162.5px,#9e9b72 163.5px,#9e6d55 179.5px,#9e4a3e 200.5px,#9e2f2d 227.5px,#9e191f 263.5px,#9e000f 349.5px,#9e0004 500.5px)"></div>
<div class="a" style="left:996px;top:204px;width:500px;height:2px;background:linear-gradient(90deg,#009e58 0.5px,#009e6a 107.5px,#479e71 135.5px,#9e9e7a 161.5px,#9e866a 168.5px,#9e6f5b 177.5px,#9e4b43 198.5px,#9e2f30 225.5px,#9e1a22 260.5px,#9e0011 346.5px,#9e0005 499.5px)"></div>
<div class="a" style="left:996px;top:206px;width:500px;height:2px;background:linear-gradient(90deg,#009e5b 0.5px,#009e6f 108.5px,#479e77 135.5px,#9e9d80 161.5px,#9e8570 168.5px,#9e6e60 177.5px,#9e4a46 198.5px,#9e2e33 225.5px,#9e1924 260.5px,#9e0012 344.5px,#9e0006 499.5px)"></div>
<div class="a" style="left:997px;top:208px;width:499px;height:2px;background:linear-gradient(90deg,#009e5f 0.5px,#009e74 107.5px,#479e7d 134.5px,#9e9c87 160.5px,#9e8575 167.5px,#9e6d64 176.5px,#9e494a 197.5px,#9e2e35 224.5px,#9e1926 259.5px,#9e0014 341.5px,#9e0006 498.5px)"></div>
<div class="a" style="left:998px;top:210px;width:496px;height:2px;background:linear-gradient(90deg,#009e62 0.5px,#009e7a 106.5px,#449e83 132.5px,#9e9c8d 159.5px,#9e847b 166.5px,#9e6d69 175.5px,#9e484d 196.5px,#9e2d38 223.5px,#9e1828 258.5px,#9e0015 338.5px,#9e0007 495.5px)"></div>
<div class="a" style="left:998px;top:212px;width:494px;height:2px;background:linear-gradient(90deg,#009e66 0.5px,#009e7f 107.5px,#479e8a 133.5px,#9d9e96 158.5px,#9e9b94 159.5px,#9e8381 166.5px,#9e6c6e 175.5px,#9e4952 195.5px,#9e2d3b 222.5px,#9e182a 257.5px,#9e0017 336.5px,#9e0008 493.5px)"></div>
<div class="a" style="left:999px;top:214px;width:492px;height:2px;background:linear-gradient(90deg,#009e6a 0.5px,#009e85 106.5px,#4a9e91 133.5px,#9e9e9e 157.5px,#9e8589 164.5px,#9e6d75 173.5px,#9e4a57 193.5px,#9e2e3f 219.5px,#9e182d 254.5px,#9e0019 333.5px,#9e0009 491.5px)"></div>
<div class="a" style="left:999px;top:216px;width:490px;height:2px;background:linear-gradient(90deg,#009e6e 0.5px,#009e8b 106.5px,#3a9e95 128.5px,#759e9e 146.5px,#9e969e 159.5px,#9e7f8a 166.5px,#9e6876 175.5px,#9e4658 195.5px,#9e2b40 222.5px,#9e162e 257.5px,#9e001a 331.5px,#9e000a 489.5px)"></div>
<div class="a" style="left:1000px;top:218px;width:487px;height:2px;background:linear-gradient(90deg,#009e72 0.5px,#009e80 58.5px,#009e91 106.5px,#4c9e9e 133.5px,#9e8e9e 160.5px,#9e6377 176.5px,#9e4258 197.5px,#9e2841 224.5px,#9e152f 259.5px,#9e001c 328.5px,#9e000b 486.5px)"></div>
<div class="a" style="left:1001px;top:220px;width:484px;height:2px;background:linear-gradient(90deg,#009e76 0.5px,#009e85 58.5px,#009e97 105.5px,#289e9e 120.5px,#9e869e 161.5px,#9e5e78 177.5px,#9e3e59 198.5px,#9e2642 225.5px,#9e1330 260.5px,#9e001e 325.5px,#9e000c 483.5px)"></div>
<div class="a" style="left:1001px;top:222px;width:482px;height:2px;background:linear-gradient(90deg,#009e79 0.5px,#009e8a 58.5px,#009e9d 105.5px,#43929e 131.5px,#9e7f9e 163.5px,#9e5877 180.5px,#9e3a5a 201.5px,#9e2343 228.5px,#9e1131 263.5px,#9e0020 323.5px,#9e000d 481.5px)"></div>
<div class="a" style="left:1002px;top:224px;width:479px;height:2px;background:linear-gradient(90deg,#009e7e 0.5px,#009e9e 94.5px,#01999e 105.5px,#4b8a9e 134.5px,#9e789e 164.5px,#9e5378 181.5px,#9e385b 202.5px,#9e2143 230.5px,#9e1032 265.5px,#9e0021 320.5px,#9e000d 478.5px)"></div>
<div class="a" style="left:1003px;top:226px;width:476px;height:2px;background:linear-gradient(90deg,#009e82 0.5px,#009e9e 81.5px,#00939e 104.5px,#4a849e 134.5px,#9e729e 165.5px,#9e4f78 182.5px,#9e345b 204.5px,#9e1e44 232.5px,#9e0e32 267.5px,#9e0023 318.5px,#9e000e 475.5px)"></div>
<div class="a" style="left:1003px;top:228px;width:474px;height:2px;background:linear-gradient(90deg,#009e86 0.5px,#009e9e 69.5px,#008e9e 104.5px,#457f9e 133.5px,#9e6c9e 167.5px,#9e4d7b 183.5px,#9e3560 202.5px,#9e224b 226.5px,#9e1239 256.5px,#9e0025 316.5px,#9e000f 473.5px)"></div>
<div class="a" style="left:1004px;top:230px;width:471px;height:2px;background:linear-gradient(90deg,#009e8a 0.5px,#009e9e 56.5px,#01889e 104.5px,#4c789e 136.5px,#9e679e 168.5px,#9e497c 184.5px,#9e3261 203.5px,#9e204c 227.5px,#9e113a 257.5px,#9e0027 313.5px,#9e001a 381.5px,#9e0010 470.5px)"></div>
<div class="a" style="left:1005px;top:232px;width:468px;height:2px;background:linear-gradient(90deg,#009e8f 0.5px,#009e9e 44.5px,#00849e 103.5px,#4c739e 136.5px,#9e619e 169.5px,#9e457c 185.5px,#9e3062 204.5px,#9e1e4d 228.5px,#9e0f3b 258.5px,#9e0029 310.5px,#9e001c 377.5px,#9e0011 467.5px)"></div>
<div class="a" style="left:1006px;top:234px;width:465px;height:2px;background:linear-gradient(90deg,#009e93 0.5px,#009e9e 31.5px,#007f9e 102.5px,#476f9e 134.5px,#9e5c9e 170.5px,#9e427d 186.5px,#9e2d63 205.5px,#9e1c4e 229.5px,#9e0e3c 259.5px,#9e002b 307.5px,#9e001d 374.5px,#9e0012 464.5px)"></div>
<div class="a" style="left:1006px;top:236px;width:463px;height:2px;background:linear-gradient(90deg,#009e97 0.5px,#009e9e 19.5px,#017a9e 103.5px,#4d699e 138.5px,#9e579e 172.5px,#9e3e7e 188.5px,#9e2b64 207.5px,#9e1a4f 231.5px,#9e0d3e 260.5px,#9e002d 305.5px,#9e001e 372.5px,#9e0013 462.5px)"></div>
<div class="a" style="left:1007px;top:238px;width:460px;height:2px;background:linear-gradient(90deg,#009e9c 0.5px,#00769e 102.5px,#4d659e 138.5px,#9e539e 173.5px,#9e3b7e 189.5px,#9e2865 208.5px,#9e1850 232.5px,#9e0c3f 261.5px,#9e002f 302.5px,#9e0020 369.5px,#9e0014 459.5px)"></div>
<div class="a" style="left:1008px;top:240px;width:457px;height:2px;background:linear-gradient(90deg,#009b9e 0.5px,#00729e 101.5px,#48629e 136.5px,#9e4e9e 174.5px,#9e387f 190.5px,#9e2666 209.5px,#9e1751 233.5px,#9e0a40 262.5px,#9e0031 299.5px,#9e0021 366.5px,#9e0015 456.5px)"></div>
<div class="a" style="left:1009px;top:242px;width:454px;height:2px;background:linear-gradient(90deg,#00979e 0.5px,#016e9e 101.5px,#4c5d9e 138.5px,#9e4a9e 175.5px,#9e3580 191.5px,#9e2467 210.5px,#9e1653 233.5px,#9e0a41 262.5px,#9e0034 296.5px,#9e0028 339.5px,#9e0016 453.5px)"></div>
<div class="a" style="left:1009px;top:244px;width:452px;height:2px;background:linear-gradient(90deg,#00939e 0.5px,#006b9e 101.5px,#4c599e 139.5px,#9e469e 177.5px,#9e3280 193.5px,#9e2268 212.5px,#9e1453 236.5px,#9e0842 264.5px,#9e0036 294.5px,#9e0029 340.5px,#9e0018 451.5px)"></div>
<div class="a" style="left:1010px;top:246px;width:450px;height:2px;background:linear-gradient(90deg,#008e9e 0.5px,#00679e 100.5px,#49569e 138.5px,#9e429e 178.5px,#9e2f81 194.5px,#9e1f69 213.5px,#9e1254 237.5px,#9e0743 265.5px,#9e0038 291.5px,#9e002a 340.5px,#9e0018 449.5px)"></div>
<div class="a" style="left:1011px;top:248px;width:447px;height:2px;background:linear-gradient(90deg,#008a9e 0.5px,#01639e 100.5px,#4d529e 140.5px,#9e3f9e 179.5px,#9e2c81 195.5px,#9e1d69 214.5px,#9e1155 237.5px,#9e0645 265.5px,#9e003b 288.5px,#9e002b 339.5px,#9e001a 446.5px)"></div>
<div class="a" style="left:1012px;top:250px;width:444px;height:2px;background:linear-gradient(90deg,#00869e 0.5px,#00609e 99.5px,#4d4e9e 140.5px,#9e3b9e 180.5px,#9e2a82 196.5px,#9e1b6a 215.5px,#9e0f56 238.5px,#9e0546 266.5px,#9e003d 285.5px,#9e002c 339.5px,#9e001b 443.5px)"></div>
<div class="a" style="left:1013px;top:252px;width:441px;height:2px;background:linear-gradient(90deg,#00839e 0.5px,#005d9e 98.5px,#4b4c9e 139.5px,#9e389e 181.5px,#9e2782 197.5px,#9e1a6b 216.5px,#9e0e57 239.5px,#9e0447 266.5px,#9e0040 282.5px,#9e002e 338.5px,#9e001c 440.5px)"></div>
<div class="a" style="left:1013px;top:254px;width:439px;height:2px;background:linear-gradient(90deg,#007f9e 0.5px,#015a9e 99.5px,#4e489e 142.5px,#9e349e 183.5px,#9e2583 199.5px,#9e186c 218.5px,#9e0c58 241.5px,#9e0348 268.5px,#9e002f 338.5px,#9e001d 438.5px)"></div>
<div class="a" style="left:1014px;top:256px;width:436px;height:2px;background:linear-gradient(90deg,#007c9e 0.5px,#00579e 98.5px,#4e459e 142.5px,#9e319e 184.5px,#9e2283 200.5px,#9e166c 219.5px,#9e0249 268.5px,#9e0030 337.5px,#9e001e 435.5px)"></div>
<div class="a" style="left:1015px;top:258px;width:433px;height:2px;background:linear-gradient(90deg,#00789e 0.5px,#00559e 97.5px,#4a439e 140.5px,#9e2e9e 185.5px,#9e2084 201.5px,#9e146d 220.5px,#9e014a 269.5px,#9e0031 337.5px,#9e001f 432.5px)"></div>
<div class="a" style="left:1016px;top:260px;width:430px;height:2px;background:linear-gradient(90deg,#00759e 0.5px,#01529e 97.5px,#4d3f9e 142.5px,#9e2b9e 186.5px,#9e1e84 202.5px,#9e126e 221.5px,#9e014b 269.5px,#9e0032 336.5px,#9e0020 429.5px)"></div>
<div class="a" style="left:1017px;top:262px;width:427px;height:2px;background:linear-gradient(90deg,#00729e 0.5px,#004f9e 96.5px,#4d3d9e 142.5px,#9e299e 187.5px,#9e1c84 203.5px,#9e116f 221.5px,#9e004d 269.5px,#9e0034 335.5px,#9e0022 426.5px)"></div>
<div class="a" style="left:1018px;top:264px;width:424px;height:2px;background:linear-gradient(90deg,#006f9e 0.5px,#004d9e 95.5px,#4b3a9e 141.5px,#9e269e 188.5px,#9e1a85 204.5px,#9e0f6f 223.5px,#9e004d 270.5px,#9e0035 335.5px,#9e0023 423.5px)"></div>
<div class="a" style="left:1019px;top:266px;width:421px;height:2px;background:linear-gradient(90deg,#006c9e 0.5px,#014a9e 95.5px,#4e379e 143.5px,#9e239e 189.5px,#9e1885 205.5px,#9e0e71 223.5px,#9e004f 270.5px,#9e0036 334.5px,#9e0024 420.5px)"></div>
<div class="a" style="left:1019px;top:268px;width:419px;height:2px;background:linear-gradient(90deg,#00699e 0.5px,#00489e 95.5px,#4d359e 144.5px,#9e219e 191.5px,#9e1686 207.5px,#9e0c71 225.5px,#9e0050 271.5px,#9e0038 333.5px,#9e0025 418.5px)"></div>
<div class="a" style="left:1020px;top:270px;width:416px;height:2px;background:linear-gradient(90deg,#00669e 0.5px,#00469e 94.5px,#4c339e 143.5px,#9e1e9e 192.5px,#9e1486 208.5px,#9e0b72 226.5px,#9e0059 257.5px,#9e0051 271.5px,#9e0039 332.5px,#9e0027 415.5px)"></div>
<div class="a" style="left:1021px;top:272px;width:413px;height:2px;background:linear-gradient(90deg,#00649e 0.5px,#01449e 94.5px,#4e309e 145.5px,#9e1c9e 193.5px,#9e1286 209.5px,#9e0972 227.5px,#9e005d 254.5px,#9e0052 272.5px,#9e003a 332.5px,#9e0028 412.5px)"></div>
<div class="a" style="left:1022px;top:274px;width:410px;height:2px;background:linear-gradient(90deg,#00619e 0.5px,#00429e 93.5px,#4e2e9e 145.5px,#9e1a9e 194.5px,#9e1087 210.5px,#9e0873 228.5px,#9e0060 251.5px,#9e0053 272.5px,#9e003b 331.5px,#9e0029 409.5px)"></div>
<div class="a" style="left:1023px;top:276px;width:407px;height:2px;background:linear-gradient(90deg,#005f9e 0.5px,#00409e 92.5px,#4c2c9e 144.5px,#9e189e 195.5px,#9e0774 228.5px,#9e0064 248.5px,#9e0055 272.5px,#9e003d 330.5px,#9e002b 406.5px)"></div>
<div class="a" style="left:1024px;top:278px;width:404px;height:2px;background:linear-gradient(90deg,#005c9e 0.5px,#013e9e 92.5px,#4e2a9e 145.5px,#9e169e 196.5px,#9e0575 229.5px,#9e0067 246.5px,#9e0056 272.5px,#9e003e 329.5px,#9e002c 403.5px)"></div>
<div class="a" style="left:1025px;top:280px;width:402px;height:2px;background:linear-gradient(90deg,#005a9e 0.5px,#003c9e 91.5px,#4d289e 145.5px,#9e149e 197.5px,#9e0475 230.5px,#9e0057 272.5px,#9e003f 328.5px,#9e002d 401.5px)"></div>
<div class="a" style="left:1026px;top:282px;width:399px;height:2px;background:linear-gradient(90deg,#00579e 0.5px,#003a9e 90.5px,#4c279e 144.5px,#9e129e 198.5px,#9e0377 230.5px,#9e0058 272.5px,#9e0041 327.5px,#9e002e 398.5px)"></div>
<div class="a" style="left:1027px;top:284px;width:396px;height:2px;background:linear-gradient(90deg,#00559e 0.5px,#01389e 90.5px,#4e249e 146.5px,#9e109e 199.5px,#9e0277 231.5px,#9e0059 272.5px,#9e0042 326.5px,#9e0030 395.5px)"></div>
<div class="a" style="left:1028px;top:286px;width:393px;height:2px;background:linear-gradient(90deg,#00539e 0.5px,#00379e 89.5px,#4e229e 146.5px,#9e0e9e 200.5px,#9e0178 232.5px,#9e005a 273.5px,#9e0043 325.5px,#9e0031 392.5px)"></div>
<div class="a" style="left:1029px;top:288px;width:390px;height:2px;background:linear-gradient(90deg,#00519e 0.5px,#00359e 88.5px,#4c219e 145.5px,#9e0c9e 201.5px,#9e0078 233.5px,#9e005b 273.5px,#9e0045 324.5px,#9e0033 389.5px)"></div>
<div class="a" style="left:1030px;top:290px;width:387px;height:2px;background:linear-gradient(90deg,#004f9e 0.5px,#01339e 88.5px,#4d1f9e 146.5px,#9e0a9e 202.5px,#9e007a 233.5px,#9e005d 272.5px,#9e0046 322.5px,#9e0034 386.5px)"></div>
<div class="a" style="left:1031px;top:292px;width:384px;height:2px;background:linear-gradient(90deg,#004d9e 0.5px,#00329e 87.5px,#4d1e9e 146.5px,#9e099e 203.5px,#9e007a 234.5px,#9e005e 272.5px,#9e0048 321.5px,#9e0036 383.5px)"></div>
<div class="a" style="left:1032px;top:294px;width:381px;height:2px;background:linear-gradient(90deg,#004b9e 0.5px,#00309e 86.5px,#4d1c9e 146.5px,#9e079e 204.5px,#9e007b 234.5px,#9e005f 272.5px,#9e0049 320.5px,#9e0037 380.5px)"></div>
<div class="a" style="left:1033px;top:296px;width:378px;height:2px;background:linear-gradient(90deg,#00499e 0.5px,#012f9e 86.5px,#4e1a9e 147.5px,#9e059e 205.5px,#9e007c 235.5px,#9e0060 272.5px,#9e004a 319.5px,#9e0039 377.5px)"></div>
<div class="a" style="left:1034px;top:298px;width:375px;height:2px;background:linear-gradient(90deg,#00479e 0.5px,#002d9e 85.5px,#4e199e 147.5px,#9e049e 206.5px,#9e007c 236.5px,#9e0062 272.5px,#9e004c 317.5px,#9e003a 374.5px)"></div>
<div class="a" style="left:1035px;top:300px;width:372px;height:2px;background:linear-gradient(90deg,#00459e 0.5px,#002c9e 84.5px,#4c189e 146.5px,#9e029e 207.5px,#9e007d 236.5px,#9e0063 272.5px,#9e004d 316.5px,#9e003c 371.5px)"></div>
<div class="a" style="left:1036px;top:302px;width:369px;height:2px;background:linear-gradient(90deg,#00439e 0.5px,#012a9e 84.5px,#4d169e 147.5px,#9e019e 208.5px,#9e007e 237.5px,#9e0064 272.5px,#9e004f 315.5px,#9e003e 368.5px)"></div>
<div class="a" style="left:1037px;top:304px;width:366px;height:2px;background:linear-gradient(90deg,#00419e 0.5px,#00299e 83.5px,#4d159e 147.5px,#9e009e 209.5px,#9e007e 238.5px,#9e0065 272.5px,#9e0050 314.5px,#9e003f 365.5px)"></div>
<div class="a" style="left:1038px;top:306px;width:363px;height:2px;background:linear-gradient(90deg,#00409e 0.5px,#00289e 82.5px,#4d149e 147.5px,#9e009e 210.5px,#9e007f 238.5px,#9e0067 271.5px,#9e0052 312.5px,#9e0041 362.5px)"></div>
<div class="a" style="left:1039px;top:308px;width:360px;height:2px;background:linear-gradient(90deg,#003e9e 0.5px,#01279e 82.5px,#4e129e 148.5px,#9e009e 211.5px,#9e0081 238.5px,#9e0068 271.5px,#9e0053 311.5px,#9e0043 359.5px)"></div>
<div class="a" style="left:1040px;top:310px;width:357px;height:2px;background:linear-gradient(90deg,#003c9e 0.5px,#00259e 81.5px,#8c009e 198.5px,#9e009e 212.5px,#9e0081 239.5px,#9e0069 271.5px,#9e0055 310.5px,#9e0044 356.5px)"></div>
<div class="a" style="left:1041px;top:312px;width:355px;height:2px;background:linear-gradient(90deg,#003b9e 0.5px,#00249e 80.5px,#87009e 195.5px,#9e009e 213.5px,#9e0081 240.5px,#9e006a 271.5px,#9e0056 309.5px,#9e0046 354.5px)"></div>
<div class="a" style="left:1042px;top:314px;width:352px;height:2px;background:linear-gradient(90deg,#00399e 0.5px,#01239e 80.5px,#82009e 192.5px,#9e009e 214.5px,#9e0082 240.5px,#9e006b 271.5px,#9e0058 308.5px,#9e0048 351.5px)"></div>
<div class="a" style="left:1043px;top:316px;width:349px;height:2px;background:linear-gradient(90deg,#00389e 0.5px,#00229e 79.5px,#7e009e 189.5px,#9e009e 215.5px,#9e0083 241.5px,#9e006c 271.5px,#9e0049 348.5px)"></div>
<div class="a" style="left:1044px;top:318px;width:346px;height:2px;background:linear-gradient(90deg,#00369e 0.5px,#00219e 78.5px,#79009e 186.5px,#9e009e 216.5px,#9e0084 241.5px,#9e006e 270.5px,#9e004b 345.5px)"></div>
<div class="a" style="left:1045px;top:320px;width:343px;height:2px;background:linear-gradient(90deg,#00359e 0.5px,#00209e 77.5px,#75009e 183.5px,#9e009e 217.5px,#9e0084 242.5px,#9e006f 270.5px,#9e004d 342.5px)"></div>
<div class="a" style="left:1046px;top:322px;width:340px;height:2px;background:linear-gradient(90deg,#00339e 0.5px,#001f9e 77.5px,#71009e 180.5px,#9e009e 218.5px,#9e0085 242.5px,#9e0071 269.5px,#9e004f 339.5px)"></div>
<div class="a" style="left:1048px;top:324px;width:336px;height:2px;background:linear-gradient(90deg,#00329e 0.5px,#001e9e 75.5px,#6d009e 176.5px,#9e009e 218.5px,#9e0086 242.5px,#9e0072 268.5px,#9e0051 335.5px)"></div>
<div class="a" style="left:1049px;top:326px;width:333px;height:2px;background:linear-gradient(90deg,#00309e 0.5px,#001d9e 74.5px,#69009e 173.5px,#9e009e 219.5px,#9e0087 242.5px,#9e0073 268.5px,#9e0053 332.5px)"></div>
<div class="a" style="left:1050px;top:328px;width:330px;height:2px;background:linear-gradient(90deg,#002f9e 0.5px,#001c9e 74.5px,#65009e 170.5px,#9e009e 220.5px,#9e0075 267.5px,#9e0055 329.5px)"></div>
<div class="a" style="left:1051px;top:330px;width:327px;height:2px;background:linear-gradient(90deg,#002e9e 0.5px,#001b9e 73.5px,#62009e 168.5px,#9e009e 221.5px,#9e0076 267.5px,#9e0057 326.5px)"></div>
<div class="a" style="left:1052px;top:332px;width:324px;height:2px;background:linear-gradient(90deg,#002c9e 0.5px,#001a9e 72.5px,#5f009e 165.5px,#9e009e 222.5px,#9e0077 266.5px,#9e0059 323.5px)"></div>
<div class="a" style="left:1053px;top:334px;width:321px;height:2px;background:linear-gradient(90deg,#002b9e 0.5px,#00199e 72.5px,#5b009e 162.5px,#9e009e 223.5px,#9e0078 266.5px,#9e005b 320.5px)"></div>
<div class="a" style="left:1054px;top:336px;width:318px;height:2px;background:linear-gradient(90deg,#002a9e 0.5px,#00189e 71.5px,#58009e 159.5px,#9e009e 224.5px,#9e007a 265.5px,#9e005d 317.5px)"></div>
<div class="a" style="left:1056px;top:338px;width:314px;height:2px;background:linear-gradient(90deg,#00289e 0.5px,#00179e 69.5px,#54009e 155.5px,#9e009e 224.5px,#9e007b 264.5px,#9e0060 313.5px)"></div>
<div class="a" style="left:1057px;top:340px;width:311px;height:2px;background:linear-gradient(90deg,#00279e 0.5px,#00169e 69.5px,#51009e 152.5px,#9e009e 225.5px,#9e007d 263.5px,#9e0062 310.5px)"></div>
<div class="a" style="left:1058px;top:342px;width:308px;height:2px;background:linear-gradient(90deg,#00269e 0.5px,#00159e 68.5px,#4e009e 149.5px,#9e009e 226.5px,#9e007e 263.5px,#9e0064 307.5px)"></div>
<div class="a" style="left:1059px;top:344px;width:305px;height:2px;background:linear-gradient(90deg,#00259e 0.5px,#00159e 67.5px,#4b009e 146.5px,#9e009e 227.5px,#9e007f 262.5px,#9e0066 304.5px)"></div>
<div class="a" style="left:1060px;top:346px;width:303px;height:2px;background:linear-gradient(90deg,#00249e 0.5px,#00149e 67.5px,#48009e 143.5px,#9e009e 228.5px,#9e0080 262.5px,#9e0068 302.5px)"></div>
<div class="a" style="left:1062px;top:348px;width:299px;height:2px;background:linear-gradient(90deg,#00239e 0.5px,#00139e 65.5px,#45009e 139.5px,#9e009e 228.5px,#9e0082 260.5px,#9e006b 298.5px)"></div>
<div class="a" style="left:1063px;top:350px;width:296px;height:2px;background:linear-gradient(90deg,#00229e 0.5px,#00129e 64.5px,#42009e 136.5px,#9e009e 229.5px,#9e0083 260.5px,#9e006d 295.5px)"></div>
<div class="a" style="left:1064px;top:352px;width:293px;height:2px;background:linear-gradient(90deg,#00219e 0.5px,#00119e 64.5px,#3f009e 133.5px,#9e009e 230.5px,#9e0085 259.5px,#9e0070 292.5px)"></div>
<div class="a" style="left:1065px;top:354px;width:290px;height:2px;background:linear-gradient(90deg,#001f9e 0.5px,#00119e 63.5px,#3c009e 130.5px,#9e009e 231.5px,#9e0087 258.5px,#9e0072 289.5px)"></div>
<div class="a" style="left:1066px;top:356px;width:287px;height:2px;background:linear-gradient(90deg,#001e9e 0.5px,#00109e 62.5px,#39009e 127.5px,#9e009e 232.5px,#9e0075 286.5px)"></div>
<div class="a" style="left:1068px;top:358px;width:283px;height:2px;background:linear-gradient(90deg,#001d9e 0.5px,#000f9e 61.5px,#37009e 123.5px,#9e009e 232.5px,#9e0078 282.5px)"></div>
<div class="a" style="left:1069px;top:360px;width:280px;height:2px;background:linear-gradient(90deg,#001c9e 0.5px,#000f9e 60.5px,#34009e 120.5px,#9e009e 233.5px,#9e007a 279.5px)"></div>
<div class="a" style="left:1070px;top:362px;width:277px;height:2px;background:linear-gradient(90deg,#001b9e 0.5px,#000e9e 59.5px,#32009e 118.5px,#9e009e 234.5px,#9e007d 276.5px)"></div>
<div class="a" style="left:1071px;top:364px;width:274px;height:2px;background:linear-gradient(90deg,#001a9e 0.5px,#000d9e 59.5px,#30009e 115.5px,#9e009e 235.5px,#9e0080 273.5px)"></div>
<div class="a" style="left:1073px;top:366px;width:270px;height:2px;background:linear-gradient(90deg,#00199e 0.5px,#000d9e 57.5px,#2d009e 111.5px,#9e009e 235.5px,#9e0083 269.5px)"></div>
<div class="a" style="left:1074px;top:368px;width:267px;height:2px;background:linear-gradient(90deg,#00189e 0.5px,#000c9e 56.5px,#2b009e 108.5px,#9e009e 236.5px,#9e0086 266.5px)"></div>
<div class="a" style="left:1075px;top:370px;width:264px;height:2px;background:linear-gradient(90deg,#00189e 0.5px,#010b9e 56.5px,#29009e 105.5px,#9e009e 237.5px,#9e0089 263.5px)"></div>
<div class="a" style="left:1076px;top:372px;width:261px;height:2px;background:linear-gradient(90deg,#00179e 0.5px,#000b9e 55.5px,#26009e 102.5px,#9e009e 238.5px,#9e008c 260.5px)"></div>
<div class="a" style="left:1078px;top:374px;width:257px;height:2px;background:linear-gradient(90deg,#00169e 0.5px,#000a9e 53.5px,#24009e 98.5px,#9e009e 238.5px,#9e008f 256.5px)"></div>
<div class="a" style="left:1079px;top:376px;width:254px;height:2px;background:linear-gradient(90deg,#00159e 0.5px,#01099e 53.5px,#22009e 95.5px,#9e009e 239.5px,#9e0092 253.5px)"></div>
<div class="a" style="left:1080px;top:378px;width:252px;height:2px;background:linear-gradient(90deg,#00149e 0.5px,#00099e 52.5px,#20009e 92.5px,#9e009e 240.5px,#9e0095 251.5px)"></div>
<div class="a" style="left:1082px;top:380px;width:248px;height:2px;background:linear-gradient(90deg,#00139e 0.5px,#00089e 50.5px,#1e009e 88.5px,#9e009e 240.5px,#9e0098 247.5px)"></div>
<div class="a" style="left:1083px;top:382px;width:245px;height:2px;background:linear-gradient(90deg,#00129e 0.5px,#01089e 50.5px,#1b009e 85.5px,#9e009c 244.5px)"></div>
<div class="a" style="left:1084px;top:384px;width:242px;height:2px;background:linear-gradient(90deg,#00119e 0.5px,#00079e 49.5px,#19009e 82.5px,#9d009e 241.5px)"></div>
<div class="a" style="left:1085px;top:386px;width:239px;height:2px;background:linear-gradient(90deg,#00119e 0.5px,#00079e 48.5px,#17009e 79.5px,#99009e 238.5px)"></div>
<div class="a" style="left:1087px;top:388px;width:235px;height:2px;background:linear-gradient(90deg,#00109e 0.5px,#01069e 47.5px,#15009e 75.5px,#96009e 234.5px)"></div>
<div class="a" style="left:1088px;top:390px;width:232px;height:2px;background:linear-gradient(90deg,#000f9e 0.5px,#00059e 46.5px,#14009e 72.5px,#93009e 231.5px)"></div>
<div class="a" style="left:1090px;top:392px;width:228px;height:2px;background:linear-gradient(90deg,#000e9e 0.5px,#00059e 44.5px,#12009e 68.5px,#8f009e 227.5px)"></div>
<div class="a" style="left:1091px;top:394px;width:225px;height:2px;background:linear-gradient(90deg,#000d9e 0.5px,#01049e 44.5px,#10009e 65.5px,#8c009e 224.5px)"></div>
<div class="a" style="left:1092px;top:396px;width:222px;height:2px;background:linear-gradient(90deg,#000d9e 0.5px,#00049e 43.5px,#0f009e 63.5px,#89009e 221.5px)"></div>
<div class="a" style="left:1094px;top:398px;width:218px;height:2px;background:linear-gradient(90deg,#000c9e 0.5px,#00049e 41.5px,#0d009e 59.5px,#86009e 217.5px)"></div>
<div class="a" style="left:1095px;top:400px;width:215px;height:2px;background:linear-gradient(90deg,#000b9e 0.5px,#01039e 41.5px,#83009e 214.5px)"></div>
<div class="a" style="left:1097px;top:402px;width:211px;height:2px;background:linear-gradient(90deg,#000a9e 0.5px,#00029e 39.5px,#80009e 210.5px)"></div>
<div class="a" style="left:1098px;top:404px;width:208px;height:2px;background:linear-gradient(90deg,#00099e 0.5px,#00029e 38.5px,#7d009e 207.5px)"></div>
<div class="a" style="left:1099px;top:406px;width:205px;height:2px;background:linear-gradient(90deg,#00099e 0.5px,#01019e 38.5px,#7a009e 204.5px)"></div>
<div class="a" style="left:1101px;top:408px;width:201px;height:2px;background:linear-gradient(90deg,#00089e 0.5px,#00019e 36.5px,#77009e 200.5px)"></div>
<div class="a" style="left:1102px;top:410px;width:198px;height:2px;background:linear-gradient(90deg,#00079e 0.5px,#00019e 35.5px,#74009e 197.5px)"></div>
<div class="a" style="left:1104px;top:412px;width:195px;height:2px;background:linear-gradient(90deg,#00079e 0.5px,#01009e 34.5px,#72009e 194.5px)"></div>
<div class="a" style="left:1105px;top:414px;width:192px;height:2px;background:linear-gradient(90deg,#00069e 0.5px,#00009e 33.5px,#70009e 191.5px)"></div>
<div class="a" style="left:1107px;top:416px;width:188px;height:2px;background:linear-gradient(90deg,#00059e 0.5px,#00009e 31.5px,#6d009e 187.5px)"></div>
<div class="a" style="left:1108px;top:418px;width:185px;height:2px;background:linear-gradient(90deg,#00059e 0.5px,#01009e 31.5px,#6b009e 184.5px)"></div>
<div class="a" style="left:1110px;top:420px;width:181px;height:2px;background:linear-gradient(90deg,#00049e 0.5px,#00009e 29.5px,#68009e 180.5px)"></div>
<div class="a" style="left:1111px;top:422px;width:178px;height:2px;background:linear-gradient(90deg,#00039e 0.5px,#00009e 28.5px,#66009e 177.5px)"></div>
<div class="a" style="left:1113px;top:424px;width:174px;height:2px;background:linear-gradient(90deg,#00039e 0.5px,#00009e 26.5px,#63009e 173.5px)"></div>
<div class="a" style="left:1115px;top:426px;width:170px;height:2px;background:linear-gradient(90deg,#00029e 0.5px,#00009e 25.5px,#61009e 169.5px)"></div>
<div class="a" style="left:1116px;top:428px;width:167px;height:2px;background:linear-gradient(90deg,#00019e 0.5px,#00009e 24.5px,#5e009e 166.5px)"></div>
<div class="a" style="left:1118px;top:430px;width:163px;height:2px;background:linear-gradient(90deg,#00019e 0.5px,#00009e 22.5px,#5c009e 162.5px)"></div>
<div class="a" style="left:1119px;top:432px;width:160px;height:2px;background:linear-gradient(90deg,#00009e 0.5px,#00009e 22.5px,#5a009e 159.5px)"></div>
<div class="a" style="left:1121px;top:434px;width:156px;height:2px;background:linear-gradient(90deg,#00009e 0.5px,#00009e 20.5px,#57009e 155.5px)"></div>
<div class="a" style="left:1123px;top:436px;width:152px;height:2px;background:linear-gradient(90deg,#00009e 0.5px,#00009e 18.5px,#55009e 151.5px)"></div>
<div class="a" style="left:1125px;top:438px;width:148px;height:2px;background:linear-gradient(90deg,#00009e 0.5px,#00009e 17.5px,#53009e 147.5px)"></div>
<div class="a" style="left:1126px;top:440px;width:145px;height:2px;background:linear-gradient(90deg,#00009e 0.5px,#00009e 16.5px,#51009e 144.5px)"></div>
<div class="a" style="left:1128px;top:442px;width:141px;height:2px;background:linear-gradient(90deg,#00009e 0.5px,#00009e 14.5px,#4f009e 140.5px)"></div>
<div class="a" style="left:1130px;top:444px;width:138px;height:2px;background:linear-gradient(90deg,#00009e 0.5px,#00009e 13.5px,#4d009e 137.5px)"></div>
<div class="a" style="left:1132px;top:446px;width:134px;height:2px;background:linear-gradient(90deg,#00009e 0.5px,#00009e 11.5px,#4b009e 133.5px)"></div>
<div class="a" style="left:1133px;top:448px;width:131px;height:2px;background:linear-gradient(90deg,#00009e 0.5px,#00009e 10.5px,#49009e 130.5px)"></div>
<div class="a" style="left:1135px;top:450px;width:127px;height:2px;background:linear-gradient(90deg,#00009e 0.5px,#00009e 9.5px,#47009e 126.5px)"></div>
<div class="a" style="left:1137px;top:452px;width:123px;height:2px;background:linear-gradient(90deg,#00009e 0.5px,#00009e 7.5px,#45009e 122.5px)"></div>
<div class="a" style="left:1139px;top:454px;width:119px;height:2px;background:linear-gradient(90deg,#00009e 0.5px,#44009e 118.5px)"></div>
<div class="a" style="left:1141px;top:456px;width:115px;height:2px;background:linear-gradient(90deg,#00009e 0.5px,#42009e 114.5px)"></div>
<div class="a" style="left:1143px;top:458px;width:111px;height:2px;background:linear-gradient(90deg,#00009e 0.5px,#40009e 110.5px)"></div>
<div class="a" style="left:1145px;top:460px;width:107px;height:2px;background:linear-gradient(90deg,#00009e 0.5px,#3e009e 106.5px)"></div>
<div class="a" style="left:1148px;top:462px;width:102px;height:2px;background:linear-gradient(90deg,#02009e 0.5px,#3c009e 101.5px)"></div>
<div class="a" style="left:1150px;top:464px;width:98px;height:2px;background:linear-gradient(90deg,#02009e 0.5px,#3a009e 97.5px)"></div>
<div class="a" style="left:1152px;top:466px;width:94px;height:2px;background:linear-gradient(90deg,#03009e 0.5px,#39009e 93.5px)"></div>
<div class="a" style="left:1154px;top:468px;width:90px;height:2px;background:linear-gradient(90deg,#04009e 0.5px,#37009e 89.5px)"></div>
<div class="a" style="left:1157px;top:470px;width:85px;height:2px;background:linear-gradient(90deg,#06009e 0.5px,#35009e 84.5px)"></div>
<div class="a" style="left:1159px;top:472px;width:81px;height:2px;background:linear-gradient(90deg,#07009e 0.5px,#33009e 80.5px)"></div>
<div class="a" style="left:1161px;top:474px;width:77px;height:2px;background:linear-gradient(90deg,#07009e 0.5px,#32009e 76.5px)"></div>
<div class="a" style="left:1164px;top:476px;width:72px;height:2px;background:linear-gradient(90deg,#09009e 0.5px,#30009e 71.5px)"></div>
<div class="a" style="left:1166px;top:478px;width:69px;height:2px;background:linear-gradient(90deg,#0a009e 0.5px,#2f009e 68.5px)"></div>
<div class="a" style="left:1168px;top:480px;width:65px;height:2px;background:linear-gradient(90deg,#0b009e 0.5px,#2e009e 64.5px)"></div>
<div class="a" style="left:1171px;top:482px;width:60px;height:2px;background:linear-gradient(90deg,#0c009e 0.5px,#2c009e 59.5px)"></div>
<div class="a" style="left:1173px;top:484px;width:56px;height:2px;background:linear-gradient(90deg,#0d009e 0.5px,#2a009e 55.5px)"></div>
<div class="a" style="left:1176px;top:486px;width:51px;height:2px;background:linear-gradient(90deg,#0e009e 0.5px,#29009e 50.5px)"></div>
<div class="a" style="left:1178px;top:488px;width:47px;height:2px;background:linear-gradient(90deg,#0f009e 0.5px,#27009e 46.5px)"></div>
<div class="a" style="left:1181px;top:490px;width:42px;height:2px;background:linear-gradient(90deg,#10009e 0.5px,#26009e 41.5px)"></div>
<div class="a" style="left:1183px;top:492px;width:38px;height:2px;background:linear-gradient(90deg,#11009e 0.5px,#24009e 37.5px)"></div>
<div class="a" style="left:1185px;top:494px;width:34px;height:2px;background:linear-gradient(90deg,#12009e 0.5px,#23009e 33.5px)"></div>
<div class="a" style="left:1188px;top:496px;width:29px;height:2px;background:linear-gradient(90deg,#13009e 0.5px,#22009e 28.5px)"></div>
<div class="a" style="left:1190px;top:498px;width:25px;height:2px;background:linear-gradient(90deg,#14009e 0.5px,#20009e 24.5px)"></div>
<div class="a" style="left:1192px;top:500px;width:21px;height:2px;background:linear-gradient(90deg,#15009e 0.5px,#1f009e 20.5px)"></div>
<div class="a" style="left:1195px;top:502px;width:16px;height:2px;background:linear-gradient(90deg,#16009e 0.5px,#1d009e 15.5px)"></div>
<div class="a" style="left:1198px;top:504px;width:11px;height:2px;background:linear-gradient(90deg,#17009e 0.5px,#1c009e 10.5px)"></div>
</div>
<div class="a" style="left:0;top:0;width:1492px;height:516px;overflow:hidden;clip-path:polygon(1366.7px 180.1px,1095.9px 154.7px,1137.8px 414.2px)">
<div class="a" style="left:1093px;top:154px;width:20px;height:2px;background:linear-gradient(90deg,#00ff01 0.5px,#02ff01 3.5px,#34ff00 19.5px)"></div>
<div class="a" style="left:1093px;top:156px;width:41px;height:2px;background:linear-gradient(90deg,#00ff07 0.5px,#01ff06 3.5px,#1dff04 12.5px,#81ff00 40.5px)"></div>
<div class="a" style="left:1093px;top:158px;width:62px;height:2px;background:linear-gradient(90deg,#00ff0d 0.5px,#03ff0c 4.5px,#4fff06 27.5px,#95ff01 45.5px,#dcff00 61.5px)"></div>
<div class="a" style="left:1094px;top:160px;width:82px;height:2px;background:linear-gradient(90deg,#00ff12 0.5px,#02ff11 3.5px,#0eff11 7.5px,#65ff0b 32.5px,#afff06 50.5px,#ff0 67.5px,#ffc500 81.5px)"></div>
<div class="a" style="left:1094px;top:162px;width:104px;height:2px;background:linear-gradient(90deg,#00ff18 0.5px,#04ff17 4.5px,#61ff11 31.5px,#aaff0d 49.5px,#fffe08 67.5px,#ffda04 75.5px,#ffbd02 83.5px,#f80 103.5px)"></div>
<div class="a" style="left:1094px;top:164px;width:125px;height:2px;background:linear-gradient(90deg,#00ff1e 0.5px,#03ff1d 4.5px,#5dff18 30.5px,#a6ff14 48.5px,#fffd0f 67.5px,#ffcd0a 78.5px,#ffa405 91.5px,#ff8101 106.5px,#ff6300 124.5px)"></div>
<div class="a" style="left:1095px;top:166px;width:145px;height:2px;background:linear-gradient(90deg,#00ff24 0.5px,#00ff23 2.5px,#08ff23 5.5px,#60ff1f 30.5px,#a6ff1b 47.5px,#fffc17 66.5px,#ffc10f 80.5px,#ff9108 97.5px,#ff6a03 118.5px,#ff4900 144.5px)"></div>
<div class="a" style="left:1095px;top:168px;width:167px;height:2px;background:linear-gradient(90deg,#00ff2a 0.5px,#01ff29 3.5px,#07ff29 5.5px,#64ff25 31.5px,#afff22 49.5px,#feff1f 65.5px,#ffd718 74.5px,#ffb613 83.5px,#ff9a0f 93.5px,#ff810b 104.5px,#ff5704 131.5px,#ff3400 166.5px)"></div>
<div class="a" style="left:1095px;top:170px;width:188px;height:2px;background:linear-gradient(90deg,#00ff30 0.5px,#03ff2f 4.5px,#5fff2c 30.5px,#abff2a 48.5px,#ffff27 65.5px,#ffd21f 75.5px,#ffaf18 85.5px,#ff8f12 97.5px,#ff750d 110.5px,#ff5e09 125.5px,#ff4805 143.5px,#ff2500 187.5px)"></div>
<div class="a" style="left:1096px;top:172px;width:208px;height:2px;background:linear-gradient(90deg,#00ff36 0.5px,#00ff36 2.5px,#0cff35 6.5px,#63ff33 30.5px,#abff31 47.5px,#fffe2f 64.5px,#ffd125 74.5px,#ffa81d 86.5px,#ff8816 99.5px,#ff6a10 115.5px,#ff510a 133.5px,#ff3c06 154.5px,#ff1900 207.5px)"></div>
<div class="a" style="left:1096px;top:174px;width:230px;height:2px;background:linear-gradient(90deg,#00ff3c 0.5px,#01ff3c 3.5px,#5eff3a 29.5px,#a7ff39 46.5px,#fffd37 64.5px,#ffcc2b 75.5px,#ffa422 87.5px,#ff8019 102.5px,#ff6112 120.5px,#ff470c 141.5px,#ff3107 166.5px,#ff0f00 229.5px)"></div>
<div class="a" style="left:1096px;top:176px;width:251px;height:2px;background:linear-gradient(90deg,#00ff43 0.5px,#00ff43 3.5px,#5aff42 28.5px,#a3ff41 45.5px,#fffc3f 64.5px,#ffc731 76.5px,#ff9b26 90.5px,#ff771c 106.5px,#ff5814 126.5px,#ff3f0d 149.5px,#ff2908 177.5px,#ff0700 250.5px)"></div>
<div class="a" style="left:1097px;top:178px;width:271px;height:2px;background:linear-gradient(90deg,#00ff49 0.5px,#06ff49 4.5px,#5eff49 28.5px,#a3ff49 44.5px,#fdff48 62.5px,#fffb47 63.5px,#ffc638 75.5px,#ff972a 90.5px,#ff711f 108.5px,#ff5116 130.5px,#ff370f 156.5px,#ff2108 187.5px,#ff0f03 225.5px,#f00 270.5px)"></div>
<div class="a" style="left:1097px;top:180px;width:273px;height:2px;background:linear-gradient(90deg,#00ff50 0.5px,#04ff50 4.5px,#61ff50 29.5px,#acff51 46.5px,#feff51 62.5px,#ffc53e 75.5px,#ff9630 90.5px,#ff7024 108.5px,#ff501a 130.5px,#ff3511 157.5px,#ff1f0b 189.5px,#ff0c05 230.5px,#ff0001 272.5px)"></div>
<div class="a" style="left:1097px;top:182px;width:271px;height:2px;background:linear-gradient(90deg,#00ff57 0.5px,#00ff57 3.5px,#5dff58 28.5px,#acff59 46.5px,#ffff5a 62.5px,#ffc747 74.5px,#ff9836 89.5px,#ff7129 107.5px,#ff501e 129.5px,#ff3515 156.5px,#ff1f0d 188.5px,#ff0c07 229.5px,#ff0002 270.5px)"></div>
<div class="a" style="left:1098px;top:184px;width:268px;height:2px;background:linear-gradient(90deg,#00ff5e 0.5px,#00ff5e 2.5px,#09ff5e 5.5px,#60ff60 28.5px,#a8ff61 44.5px,#fffe62 61.5px,#ffc64e 73.5px,#ff973c 88.5px,#ff702e 106.5px,#ff5122 127.5px,#ff3619 153.5px,#ff2010 185.5px,#ff0c09 226.5px,#ff0004 267.5px)"></div>
<div class="a" style="left:1098px;top:186px;width:266px;height:2px;background:linear-gradient(90deg,#00ff65 0.5px,#01ff65 3.5px,#60ff67 28.5px,#a8ff69 44.5px,#fffd6b 61.5px,#ffc555 73.5px,#ff9642 88.5px,#ff6f33 106.5px,#ff5026 127.5px,#ff351c 153.5px,#ff1f13 184.5px,#ff0c0c 224.5px,#ff0006 265.5px)"></div>
<div class="a" style="left:1098px;top:188px;width:264px;height:2px;background:linear-gradient(90deg,#00ff6c 0.5px,#00ff6c 3.5px,#5bff6f 27.5px,#9fff72 42.5px,#fdff75 60.5px,#fffc73 61.5px,#ffc45c 73.5px,#ff9749 87.5px,#ff6f38 105.5px,#ff502b 126.5px,#ff351f 152.5px,#ff1f16 183.5px,#ff0c0e 223.5px,#ff0009 263.5px)"></div>
<div class="a" style="left:1099px;top:190px;width:261px;height:2px;background:linear-gradient(90deg,#00ff73 0.5px,#00ff73 2.5px,#06ff74 4.5px,#5fff77 27.5px,#adff7b 44.5px,#feff7e 59.5px,#fffb7c 60.5px,#ffc363 72.5px,#ff964f 86.5px,#ff703e 103.5px,#ff502f 124.5px,#ff3623 149.5px,#ff2019 180.5px,#ff0c11 220.5px,#ff000b 260.5px)"></div>
<div class="a" style="left:1099px;top:192px;width:259px;height:2px;background:linear-gradient(90deg,#00ff7a 0.5px,#05ff7b 4.5px,#63ff80 28.5px,#aeff84 44.5px,#ff8 59.5px,#ffc66c 71.5px,#ff9756 85.5px,#ff7144 102.5px,#ff5034 123.5px,#ff3627 148.5px,#ff201c 179.5px,#ff0c13 218.5px,#ff000d 258.5px)"></div>
<div class="a" style="left:1099px;top:194px;width:257px;height:2px;background:linear-gradient(90deg,#00ff82 0.5px,#00ff82 3.5px,#5eff88 27.5px,#a9ff8d 43.5px,#fffe91 59.5px,#ffc474 71.5px,#ff965c 85.5px,#ff7049 102.5px,#ff5139 122.5px,#ff362b 147.5px,#ff1f1f 178.5px,#ff0c16 217.5px,#ff000f 256.5px)"></div>
<div class="a" style="left:1100px;top:196px;width:254px;height:2px;background:linear-gradient(90deg,#00ff8a 0.5px,#00ff8a 2.5px,#0aff8b 5.5px,#62ff91 27.5px,#a9ff96 42.5px,#fffd9b 58.5px,#ffc37b 70.5px,#ff9562 84.5px,#ff6f4e 101.5px,#ff503d 121.5px,#ff352e 146.5px,#ff1f23 176.5px,#ff0c18 214.5px,#f01 253.5px)"></div>
<div class="a" style="left:1100px;top:198px;width:252px;height:2px;background:linear-gradient(90deg,#00ff91 0.5px,#02ff92 3.5px,#5dff99 26.5px,#a4ff9f 41.5px,#fffca4 58.5px,#ffc685 69.5px,#ff976a 83.5px,#ff7054 100.5px,#ff5042 120.5px,#ff3633 144.5px,#ff2026 174.5px,#ff0d1b 212.5px,#ff0013 251.5px)"></div>
<div class="a" style="left:1100px;top:200px;width:250px;height:2px;background:linear-gradient(90deg,#0f9 0.5px,#00ff9a 3.5px,#58ffa2 25.5px,#9fffa8 40.5px,#fdffb0 57.5px,#fffbae 58.5px,#ffc58d 69.5px,#ff9671 83.5px,#ff6e59 100.5px,#ff4f46 120.5px,#ff3536 144.5px,#ff1f29 174.5px,#ff0c1e 211.5px,#ff0016 249.5px)"></div>
<div class="a" style="left:1101px;top:202px;width:247px;height:2px;background:linear-gradient(90deg,#00ffa1 0.5px,#00ffa2 2.5px,#07ffa3 4.5px,#61ffab 26.5px,#afffb3 42.5px,#feffbb 56.5px,#ffc898 67.5px,#ff9779 81.5px,#ff7161 97.5px,#ff514c 117.5px,#ff363b 141.5px,#ff202d 170.5px,#ff0d21 207.5px,#ff0018 246.5px)"></div>
<div class="a" style="left:1101px;top:204px;width:245px;height:2px;background:linear-gradient(90deg,#00ffa9 0.5px,#02ffab 3.5px,#60ffb5 26.5px,#aaffbc 41.5px,#fffec5 56.5px,#ffc6a0 67.5px,#ff9981 80.5px,#ff7267 96.5px,#ff5151 116.5px,#ff363f 140.5px,#ff2030 169.5px,#ff0d23 206.5px,#ff001a 244.5px)"></div>
<div class="a" style="left:1101px;top:206px;width:243px;height:2px;background:linear-gradient(90deg,#00ffb2 0.5px,#01ffb3 3.5px,#5bffbe 25.5px,#a5ffc6 40.5px,#fffdcf 56.5px,#ffc5a8 67.5px,#ff9888 80.5px,#ff716d 96.5px,#ff5056 116.5px,#ff3543 140.5px,#ff2034 168.5px,#ff0c26 205.5px,#ff001d 242.5px)"></div>
<div class="a" style="left:1102px;top:208px;width:240px;height:2px;background:linear-gradient(90deg,#0fb 0.5px,#03ffbc 3.5px,#60ffc8 25.5px,#a5ffd0 39.5px,#fffcd9 55.5px,#ffc4b0 66.5px,#ff968f 79.5px,#ff7072 95.5px,#ff505b 114.5px,#ff3547 138.5px,#ff1f37 166.5px,#ff0c29 202.5px,#ff001f 239.5px)"></div>
<div class="a" style="left:1102px;top:210px;width:238px;height:2px;background:linear-gradient(90deg,#00ffc3 0.5px,#02ffc5 3.5px,#5affd1 24.5px,#a0ffda 38.5px,#fdffe7 54.5px,#fffbe4 55.5px,#ffc3b8 66.5px,#ff9595 79.5px,#ff6f78 95.5px,#ff4f5f 114.5px,#ff354b 137.5px,#ff1f3b 165.5px,#ff0c2c 201.5px,#f02 237.5px)"></div>
<div class="a" style="left:1102px;top:212px;width:237px;height:2px;background:linear-gradient(90deg,#0fc 0.5px,#01ffce 3.5px,#5fffdb 25.5px,#abffe6 40.5px,#fefff2 54.5px,#ffc6c4 65.5px,#ff979f 78.5px,#ff6f7f 94.5px,#ff5065 113.5px,#ff3550 136.5px,#ff1f3e 164.5px,#ff0c2e 201.5px,#ff0024 236.5px)"></div>
<div class="a" style="left:1102px;top:214px;width:235px;height:2px;background:linear-gradient(90deg,#00ffd5 0.5px,#03ffd7 4.5px,#59ffe5 24.5px,#a6fff0 39.5px,#fffffe 54.5px,#ffc4cd 65.5px,#ff96a6 78.5px,#ff7086 93.5px,#ff506b 112.5px,#ff3554 135.5px,#ff1f42 163.5px,#ff0c32 199.5px,#ff0027 234.5px)"></div>
<div class="a" style="left:1103px;top:216px;width:232px;height:2px;background:linear-gradient(90deg,#00ffde 0.5px,#02ffe0 3.5px,#4bffec 20.5px,#b7fffe 41.5px,#fff1fe 55.5px,#ffbfd2 65.5px,#ff91aa 78.5px,#ff6d8a 93.5px,#ff4d6e 112.5px,#ff3357 135.5px,#ff1e45 162.5px,#ff0b34 197.5px,#ff0029 231.5px)"></div>
<div class="a" style="left:1103px;top:218px;width:230px;height:2px;background:linear-gradient(90deg,#00ffe8 0.5px,#01ffea 3.5px,#38fff3 16.5px,#7bffff 30.5px,#ffe4fe 57.5px,#ffb5d3 67.5px,#ff8aac 80.5px,#ff688c 95.5px,#ff4a71 114.5px,#ff315a 136.5px,#ff1d47 163.5px,#ff0b37 197.5px,#ff002c 229.5px)"></div>
<div class="a" style="left:1103px;top:220px;width:228px;height:2px;background:linear-gradient(90deg,#00fff1 0.5px,#00fff3 3.5px,#21fffa 11.5px,#40ffff 18.5px,#ffd8fe 59.5px,#ffa9d1 70.5px,#ff84ae 82.5px,#ff638e 97.5px,#ff4774 115.5px,#ff2f5d 137.5px,#ff1c4a 163.5px,#ff0a3a 197.5px,#ff002f 227.5px)"></div>
<div class="a" style="left:1104px;top:222px;width:225px;height:2px;background:linear-gradient(90deg,#00fffb 0.5px,#02fffe 3.5px,#3df5ff 17.5px,#ffcdfe 60.5px,#ffa0d2 71.5px,#ff7daf 83.5px,#ff5e90 98.5px,#ff4476 116.5px,#ff2e60 137.5px,#ff1a4d 163.5px,#ff0032 224.5px)"></div>
<div class="a" style="left:1104px;top:224px;width:223px;height:2px;background:linear-gradient(90deg,#00f9ff 0.5px,#01f7ff 3.5px,#35ecff 16.5px,#93d9ff 38.5px,#ffc2fe 62.5px,#ff98d3 73.5px,#ff77b1 85.5px,#ff5a92 100.5px,#ff4179 117.5px,#ff2c63 138.5px,#ff1950 163.5px,#ff0035 222.5px)"></div>
<div class="a" style="left:1104px;top:226px;width:221px;height:2px;background:linear-gradient(90deg,#00f0ff 0.5px,#00edff 3.5px,#2fe4ff 15.5px,#91cfff 39.5px,#ffb8ff 64.5px,#ff91d4 75.5px,#ff71b3 87.5px,#ff5796 101.5px,#ff3f7c 118.5px,#ff2b67 138.5px,#ff1a55 161.5px,#ff0037 220.5px)"></div>
<div class="a" style="left:1105px;top:228px;width:218px;height:2px;background:linear-gradient(90deg,#00e6ff 0.5px,#02e4ff 3.5px,#40d7ff 19.5px,#ffaeff 65.5px,#ff8cd8 75.5px,#ff6eb7 87.5px,#ff5499 101.5px,#ff3d80 118.5px,#ff2a6a 137.5px,#ff1958 160.5px,#ff003b 217.5px)"></div>
<div class="a" style="left:1105px;top:230px;width:216px;height:2px;background:linear-gradient(90deg,#00deff 0.5px,#01dcff 3.5px,#3dcfff 19.5px,#ffa5ff 67.5px,#ff82d6 78.5px,#ff66b6 90.5px,#ff4e99 104.5px,#ff3981 120.5px,#ff175a 161.5px,#ff003e 215.5px)"></div>
<div class="a" style="left:1105px;top:232px;width:214px;height:2px;background:linear-gradient(90deg,#00d7ff 0.5px,#00d4ff 3.5px,#36c8ff 18.5px,#96b4ff 43.5px,#ff9dff 69.5px,#ff7eda 79.5px,#ff63b9 91.5px,#ff4b9d 105.5px,#ff3785 121.5px,#ff175e 160.5px,#ff0041 213.5px)"></div>
<div class="a" style="left:1106px;top:234px;width:211px;height:2px;background:linear-gradient(90deg,#00ceff 0.5px,#02ccff 3.5px,#46bdff 22.5px,#ff95ff 70.5px,#ff78db 80.5px,#ff5ebb 92.5px,#ff49a0 105.5px,#ff3588 121.5px,#ff1661 159.5px,#f04 210.5px)"></div>
<div class="a" style="left:1106px;top:236px;width:209px;height:2px;background:linear-gradient(90deg,#00c7ff 0.5px,#01c5ff 3.5px,#43b7ff 22.5px,#ff8dff 72.5px,#ff72dc 82.5px,#ff59bc 94.5px,#ff45a2 107.5px,#ff338b 122.5px,#ff1565 159.5px,#ff0047 208.5px)"></div>
<div class="a" style="left:1106px;top:238px;width:207px;height:2px;background:linear-gradient(90deg,#00c1ff 0.5px,#00bfff 3.5px,#3db1ff 21.5px,#ff85ff 74.5px,#ff6cdd 84.5px,#ff56bf 95.5px,#ff42a5 108.5px,#ff318e 123.5px,#ff1568 159.5px,#ff004b 206.5px)"></div>
<div class="a" style="left:1107px;top:240px;width:204px;height:2px;background:linear-gradient(90deg,#00baff 0.5px,#02b8ff 3.5px,#4ba7ff 25.5px,#ff7eff 75.5px,#f6d 85.5px,#ff51c1 96.5px,#ff3fa6 109.5px,#ff2f91 123.5px,#ff146b 158.5px,#ff004e 203.5px)"></div>
<div class="a" style="left:1107px;top:242px;width:202px;height:2px;background:linear-gradient(90deg,#00b4ff 0.5px,#01b2ff 3.5px,#45a2ff 24.5px,#ff78ff 77.5px,#ff61de 87.5px,#ff4dc2 98.5px,#ff2d93 124.5px,#ff136e 158.5px,#ff0052 201.5px)"></div>
<div class="a" style="left:1107px;top:244px;width:200px;height:2px;background:linear-gradient(90deg,#00aeff 0.5px,#00acff 3.5px,#429dff 24.5px,#ff71ff 79.5px,#ff5de1 88.5px,#ff4ac5 99.5px,#ff2b96 125.5px,#ff1272 158.5px,#f05 199.5px)"></div>
<div class="a" style="left:1108px;top:246px;width:197px;height:2px;background:linear-gradient(90deg,#00a8ff 0.5px,#02a6ff 3.5px,#5094ff 28.5px,#ff6bff 80.5px,#ff58e2 89.5px,#ff46c6 100.5px,#ff2999 125.5px,#ff1276 156.5px,#ff0059 196.5px)"></div>
<div class="a" style="left:1108px;top:248px;width:195px;height:2px;background:linear-gradient(90deg,#00a2ff 0.5px,#01a0ff 3.5px,#4a8fff 27.5px,#ff65ff 82.5px,#ff53e3 91.5px,#ff42c7 102.5px,#ff279c 126.5px,#ff1179 156.5px,#ff005d 194.5px)"></div>
<div class="a" style="left:1108px;top:250px;width:193px;height:2px;background:linear-gradient(90deg,#009dff 0.5px,#009bff 3.5px,#448bff 26.5px,#ff5fff 84.5px,#ff3fca 103.5px,#ff259f 127.5px,#ff107d 156.5px,#ff0061 192.5px)"></div>
<div class="a" style="left:1109px;top:252px;width:190px;height:2px;background:linear-gradient(90deg,#0098ff 0.5px,#0296ff 3.5px,#5482ff 31.5px,#ff5aff 85.5px,#ff3bcb 104.5px,#ff23a2 127.5px,#ff0f80 155.5px,#ff0065 189.5px)"></div>
<div class="a" style="left:1109px;top:254px;width:188px;height:2px;background:linear-gradient(90deg,#0093ff 0.5px,#0191ff 3.5px,#4e7fff 30.5px,#f5f 87.5px,#ff39ce 105.5px,#ff22a6 127.5px,#ff0f84 154.5px,#ff0069 187.5px)"></div>
<div class="a" style="left:1109px;top:256px;width:186px;height:2px;background:linear-gradient(90deg,#008fff 0.5px,#008dff 3.5px,#497bff 29.5px,#ff50ff 89.5px,#ff35cf 107.5px,#ff20a9 128.5px,#ff0e88 154.5px,#ff006d 185.5px)"></div>
<div class="a" style="left:1110px;top:258px;width:184px;height:2px;background:linear-gradient(90deg,#008aff 0.5px,#0288ff 3.5px,#5773ff 34.5px,#ff4bff 90.5px,#ff33d2 107.5px,#ff1eab 128.5px,#ff0d8b 153.5px,#ff0070 183.5px)"></div>
<div class="a" style="left:1110px;top:260px;width:182px;height:2px;background:linear-gradient(90deg,#0086ff 0.5px,#0184ff 3.5px,#5270ff 33.5px,#ff46ff 92.5px,#ff2fd3 109.5px,#ff1cae 129.5px,#ff0c8f 153.5px,#ff0075 181.5px)"></div>
<div class="a" style="left:1110px;top:262px;width:180px;height:2px;background:linear-gradient(90deg,#0082ff 0.5px,#0080ff 3.5px,#4d6dff 32.5px,#ff42ff 94.5px,#ff2cd3 111.5px,#ff1ab0 130.5px,#ff0b92 153.5px,#ff0079 179.5px)"></div>
<div class="a" style="left:1111px;top:264px;width:177px;height:2px;background:linear-gradient(90deg,#007dff 0.5px,#027cff 3.5px,#5866ff 36.5px,#ff3dff 95.5px,#ff29d6 111.5px,#ff19b5 129.5px,#ff0a97 151.5px,#ff007e 176.5px)"></div>
<div class="a" style="left:1111px;top:266px;width:175px;height:2px;background:linear-gradient(90deg,#007aff 0.5px,#0178ff 3.5px,#5563ff 36.5px,#ff39ff 97.5px,#ff27d9 112.5px,#ff17b7 130.5px,#ff0a9b 150.5px,#ff0083 174.5px)"></div>
<div class="a" style="left:1111px;top:268px;width:173px;height:2px;background:linear-gradient(90deg,#0076ff 0.5px,#0074ff 3.5px,#5160ff 35.5px,#ff35ff 99.5px,#ff25dc 113.5px,#ff16bb 130.5px,#ff099f 150.5px,#ff0087 172.5px)"></div>
<div class="a" style="left:1112px;top:270px;width:170px;height:2px;background:linear-gradient(90deg,#0072ff 0.5px,#0270ff 3.5px,#5b5aff 39.5px,#ff31ff 100.5px,#ff22dc 114.5px,#ff14be 130.5px,#ff09a4 148.5px,#ff008c 169.5px)"></div>
<div class="a" style="left:1112px;top:272px;width:168px;height:2px;background:linear-gradient(90deg,#006fff 0.5px,#016dff 3.5px,#5658ff 38.5px,#ff2dff 102.5px,#ff20df 115.5px,#ff13c2 130.5px,#ff08a9 147.5px,#ff0091 167.5px)"></div>
<div class="a" style="left:1112px;top:274px;width:166px;height:2px;background:linear-gradient(90deg,#006cff 0.5px,#006aff 3.5px,#5455ff 38.5px,#ff2aff 104.5px,#ff1de0 117.5px,#ff11c5 131.5px,#ff0097 165.5px)"></div>
<div class="a" style="left:1113px;top:276px;width:163px;height:2px;background:linear-gradient(90deg,#0068ff 0.5px,#0266ff 3.5px,#5e4fff 42.5px,#ff26ff 105.5px,#ff10c9 130.5px,#ff009c 162.5px)"></div>
<div class="a" style="left:1113px;top:278px;width:161px;height:2px;background:linear-gradient(90deg,#0065ff 0.5px,#0163ff 3.5px,#594dff 41.5px,#ff23ff 107.5px,#ff0fcb 131.5px,#ff00a2 160.5px)"></div>
<div class="a" style="left:1113px;top:280px;width:159px;height:2px;background:linear-gradient(90deg,#0062ff 0.5px,#0061ff 3.5px,#544bff 40.5px,#ff20ff 109.5px,#ff0ed0 131.5px,#ff00a8 158.5px)"></div>
<div class="a" style="left:1113px;top:282px;width:157px;height:2px;background:linear-gradient(90deg,#005fff 0.5px,#025dff 4.5px,#5249ff 40.5px,#ff1cff 111.5px,#ff0cd2 132.5px,#ff00ad 156.5px)"></div>
<div class="a" style="left:1114px;top:284px;width:154px;height:2px;background:linear-gradient(90deg,#005cff 0.5px,#015bff 3.5px,#5c43ff 44.5px,#ff19ff 112.5px,#ff0bd6 131.5px,#ff00b4 153.5px)"></div>
<div class="a" style="left:1114px;top:286px;width:152px;height:2px;background:linear-gradient(90deg,#005aff 0.5px,#0058ff 3.5px,#5742ff 43.5px,#ff16ff 114.5px,#ff0ada 131.5px,#ff00ba 151.5px)"></div>
<div class="a" style="left:1114px;top:288px;width:150px;height:2px;background:linear-gradient(90deg,#0057ff 0.5px,#0255ff 4.5px,#5340ff 42.5px,#ff13ff 116.5px,#ff08dd 132.5px,#ff00c0 149.5px)"></div>
<div class="a" style="left:1115px;top:290px;width:147px;height:2px;background:linear-gradient(90deg,#0054ff 0.5px,#0153ff 3.5px,#5c3bff 46.5px,#f1f 117.5px,#ff07e1 131.5px,#ff00c7 146.5px)"></div>
<div class="a" style="left:1115px;top:292px;width:145px;height:2px;background:linear-gradient(90deg,#0052ff 0.5px,#0050ff 3.5px,#5a39ff 46.5px,#ff0eff 119.5px,#ff00ce 144.5px)"></div>
<div class="a" style="left:1115px;top:294px;width:143px;height:2px;background:linear-gradient(90deg,#004fff 0.5px,#024dff 4.5px,#5637ff 45.5px,#ff0bff 121.5px,#ff00d5 142.5px)"></div>
<div class="a" style="left:1116px;top:296px;width:140px;height:2px;background:linear-gradient(90deg,#004dff 0.5px,#014bff 3.5px,#5e33ff 49.5px,#ff09ff 122.5px,#f0d 139.5px)"></div>
<div class="a" style="left:1116px;top:298px;width:138px;height:2px;background:linear-gradient(90deg,#004bff 0.5px,#0149ff 3.5px,#5a31ff 48.5px,#ff06ff 124.5px,#ff00e4 137.5px)"></div>
<div class="a" style="left:1116px;top:300px;width:136px;height:2px;background:linear-gradient(90deg,#0048ff 0.5px,#0246ff 4.5px,#5830ff 48.5px,#ff04ff 126.5px,#ff00ec 135.5px)"></div>
<div class="a" style="left:1117px;top:302px;width:134px;height:2px;background:linear-gradient(90deg,#0046ff 0.5px,#0144ff 3.5px,#602bff 52.5px,#ff01ff 127.5px,#ff00f3 133.5px)"></div>
<div class="a" style="left:1117px;top:304px;width:132px;height:2px;background:linear-gradient(90deg,#04f 0.5px,#0142ff 3.5px,#4730ff 40.5px,#f0f 129.5px,#ff00fb 131.5px)"></div>
<div class="a" style="left:1117px;top:306px;width:130px;height:2px;background:linear-gradient(90deg,#0042ff 0.5px,#0041ff 3.5px,#5729ff 49.5px,#fa00ff 129.5px)"></div>
<div class="a" style="left:1118px;top:308px;width:127px;height:2px;background:linear-gradient(90deg,#0040ff 0.5px,#013eff 3.5px,#5b26ff 51.5px,#f200ff 126.5px)"></div>
<div class="a" style="left:1118px;top:310px;width:125px;height:2px;background:linear-gradient(90deg,#003eff 0.5px,#013cff 3.5px,#5127ff 47.5px,#ea00ff 124.5px)"></div>
<div class="a" style="left:1118px;top:312px;width:123px;height:2px;background:linear-gradient(90deg,#003cff 0.5px,#003bff 3.5px,#4a27ff 44.5px,#e200ff 122.5px)"></div>
<div class="a" style="left:1119px;top:314px;width:120px;height:2px;background:linear-gradient(90deg,#003aff 0.5px,#0138ff 3.5px,#4e24ff 46.5px,#da00ff 119.5px)"></div>
<div class="a" style="left:1119px;top:316px;width:118px;height:2px;background:linear-gradient(90deg,#0038ff 0.5px,#0137ff 3.5px,#4524ff 42.5px,#d300ff 117.5px)"></div>
<div class="a" style="left:1119px;top:318px;width:116px;height:2px;background:linear-gradient(90deg,#0036ff 0.5px,#0035ff 3.5px,#3d25ff 38.5px,#cb00ff 115.5px)"></div>
<div class="a" style="left:1120px;top:320px;width:113px;height:2px;background:linear-gradient(90deg,#0034ff 0.5px,#0133ff 3.5px,#4221ff 41.5px,#c400ff 112.5px)"></div>
<div class="a" style="left:1120px;top:322px;width:111px;height:2px;background:linear-gradient(90deg,#03f 0.5px,#0131ff 3.5px,#3822ff 36.5px,#bd00ff 110.5px)"></div>
<div class="a" style="left:1120px;top:324px;width:109px;height:2px;background:linear-gradient(90deg,#0031ff 0.5px,#0030ff 3.5px,#3023ff 32.5px,#b700ff 108.5px)"></div>
<div class="a" style="left:1121px;top:326px;width:106px;height:2px;background:linear-gradient(90deg,#002fff 0.5px,#012eff 3.5px,#3620ff 35.5px,#b000ff 105.5px)"></div>
<div class="a" style="left:1121px;top:328px;width:104px;height:2px;background:linear-gradient(90deg,#002eff 0.5px,#012dff 3.5px,#2e20ff 31.5px,#a0f 103.5px)"></div>
<div class="a" style="left:1121px;top:330px;width:102px;height:2px;background:linear-gradient(90deg,#002dff 0.5px,#002bff 3.5px,#2521ff 26.5px,#a400ff 101.5px)"></div>
<div class="a" style="left:1122px;top:332px;width:99px;height:2px;background:linear-gradient(90deg,#002bff 0.5px,#0129ff 3.5px,#2c1eff 30.5px,#9e00ff 98.5px)"></div>
<div class="a" style="left:1122px;top:334px;width:97px;height:2px;background:linear-gradient(90deg,#0029ff 0.5px,#0128ff 3.5px,#231fff 25.5px,#9800ff 96.5px)"></div>
<div class="a" style="left:1122px;top:336px;width:95px;height:2px;background:linear-gradient(90deg,#0028ff 0.5px,#0027ff 3.5px,#1a20ff 20.5px,#9200ff 94.5px)"></div>
<div class="a" style="left:1123px;top:338px;width:92px;height:2px;background:linear-gradient(90deg,#0026ff 0.5px,#211cff 24.5px,#8d00ff 91.5px)"></div>
<div class="a" style="left:1123px;top:340px;width:90px;height:2px;background:linear-gradient(90deg,#0025ff 0.5px,#0124ff 3.5px,#191dff 19.5px,#8700ff 89.5px)"></div>
<div class="a" style="left:1123px;top:342px;width:88px;height:2px;background:linear-gradient(90deg,#0024ff 0.5px,#0023ff 3.5px,#0f1eff 13.5px,#8200ff 87.5px)"></div>
<div class="a" style="left:1124px;top:344px;width:85px;height:2px;background:linear-gradient(90deg,#02f 0.5px,#171bff 18.5px,#7d00ff 84.5px)"></div>
<div class="a" style="left:1124px;top:346px;width:83px;height:2px;background:linear-gradient(90deg,#0021ff 0.5px,#0e1cff 12.5px,#7800ff 82.5px)"></div>
<div class="a" style="left:1124px;top:348px;width:82px;height:2px;background:linear-gradient(90deg,#0020ff 0.5px,#061dff 7.5px,#7500ff 81.5px)"></div>
<div class="a" style="left:1124px;top:350px;width:80px;height:2px;background:linear-gradient(90deg,#001fff 0.5px,#011dff 4.5px,#7000ff 79.5px)"></div>
<div class="a" style="left:1125px;top:352px;width:77px;height:2px;background:linear-gradient(90deg,#001dff 0.5px,#051bff 6.5px,#6b00ff 76.5px)"></div>
<div class="a" style="left:1125px;top:354px;width:75px;height:2px;background:linear-gradient(90deg,#001cff 0.5px,#001bff 3.5px,#6700ff 74.5px)"></div>
<div class="a" style="left:1125px;top:356px;width:73px;height:2px;background:linear-gradient(90deg,#001bff 0.5px,#011aff 4.5px,#6200ff 72.5px)"></div>
<div class="a" style="left:1126px;top:358px;width:70px;height:2px;background:linear-gradient(90deg,#001aff 0.5px,#0119ff 3.5px,#5e00ff 69.5px)"></div>
<div class="a" style="left:1126px;top:360px;width:68px;height:2px;background:linear-gradient(90deg,#0019ff 0.5px,#0018ff 3.5px,#5a00ff 67.5px)"></div>
<div class="a" style="left:1126px;top:362px;width:66px;height:2px;background:linear-gradient(90deg,#0018ff 0.5px,#0116ff 4.5px,#50f 65.5px)"></div>
<div class="a" style="left:1127px;top:364px;width:63px;height:2px;background:linear-gradient(90deg,#0016ff 0.5px,#0115ff 3.5px,#5100ff 62.5px)"></div>
<div class="a" style="left:1127px;top:366px;width:61px;height:2px;background:linear-gradient(90deg,#0015ff 0.5px,#0014ff 3.5px,#4d00ff 60.5px)"></div>
<div class="a" style="left:1127px;top:368px;width:59px;height:2px;background:linear-gradient(90deg,#0014ff 0.5px,#0113ff 4.5px,#4900ff 58.5px)"></div>
<div class="a" style="left:1128px;top:370px;width:56px;height:2px;background:linear-gradient(90deg,#0013ff 0.5px,#4500ff 55.5px)"></div>
<div class="a" style="left:1128px;top:372px;width:54px;height:2px;background:linear-gradient(90deg,#0012ff 0.5px,#01f 3.5px,#4200ff 53.5px)"></div>
<div class="a" style="left:1128px;top:374px;width:52px;height:2px;background:linear-gradient(90deg,#01f 0.5px,#0010ff 3.5px,#3e00ff 51.5px)"></div>
<div class="a" style="left:1129px;top:376px;width:49px;height:2px;background:linear-gradient(90deg,#0010ff 0.5px,#3a00ff 48.5px)"></div>
<div class="a" style="left:1129px;top:378px;width:47px;height:2px;background:linear-gradient(90deg,#000fff 0.5px,#000eff 3.5px,#3700ff 46.5px)"></div>
<div class="a" style="left:1129px;top:380px;width:45px;height:2px;background:linear-gradient(90deg,#000eff 0.5px,#000dff 3.5px,#30f 44.5px)"></div>
<div class="a" style="left:1130px;top:382px;width:42px;height:2px;background:linear-gradient(90deg,#000dff 0.5px,#3000ff 41.5px)"></div>
<div class="a" style="left:1130px;top:384px;width:40px;height:2px;background:linear-gradient(90deg,#000dff 0.5px,#2d00ff 39.5px)"></div>
<div class="a" style="left:1130px;top:386px;width:38px;height:2px;background:linear-gradient(90deg,#000cff 0.5px,#000bff 3.5px,#2900ff 37.5px)"></div>
<div class="a" style="left:1131px;top:388px;width:35px;height:2px;background:linear-gradient(90deg,#000bff 0.5px,#2600ff 34.5px)"></div>
<div class="a" style="left:1131px;top:390px;width:33px;height:2px;background:linear-gradient(90deg,#000aff 0.5px,#2300ff 32.5px)"></div>
<div class="a" style="left:1131px;top:392px;width:32px;height:2px;background:linear-gradient(90deg,#0009ff 0.5px,#0008ff 3.5px,#2100ff 31.5px)"></div>
<div class="a" style="left:1132px;top:394px;width:29px;height:2px;background:linear-gradient(90deg,#0008ff 0.5px,#1e00ff 28.5px)"></div>
<div class="a" style="left:1132px;top:396px;width:27px;height:2px;background:linear-gradient(90deg,#0007ff 0.5px,#1b00ff 26.5px)"></div>
<div class="a" style="left:1132px;top:398px;width:25px;height:2px;background:linear-gradient(90deg,#0007ff 0.5px,#1800ff 24.5px)"></div>
<div class="a" style="left:1133px;top:400px;width:22px;height:2px;background:linear-gradient(90deg,#0006ff 0.5px,#1500ff 21.5px)"></div>
<div class="a" style="left:1133px;top:402px;width:20px;height:2px;background:linear-gradient(90deg,#0005ff 0.5px,#1300ff 19.5px)"></div>
<div class="a" style="left:1133px;top:404px;width:18px;height:2px;background:linear-gradient(90deg,#0004ff 0.5px,#1000ff 17.5px)"></div>
<div class="a" style="left:1134px;top:406px;width:15px;height:2px;background:linear-gradient(90deg,#0003ff 0.5px,#0d00ff 14.5px)"></div>
<div class="a" style="left:1134px;top:408px;width:13px;height:2px;background:linear-gradient(90deg,#0003ff 0.5px,#0a00ff 12.5px)"></div>
<div class="a" style="left:1134px;top:410px;width:11px;height:2px;background:linear-gradient(90deg,#0002ff 0.5px,#0800ff 10.5px)"></div>
<div class="a" style="left:1134px;top:412px;width:9px;height:2px;background:linear-gradient(90deg,#0001ff 0.5px,#0500ff 8.5px)"></div>
</div>
<svg style="left:0;top:0" width="1500" height="806" viewBox="0 0 1500 806"><path d="M992.5 131.5H1492.300V516.5H992.5z" fill="none" stroke="#b0b0b0" stroke-width="1.1"/><path d="M992.0 516V521" stroke="#b0b0b0" stroke-width="1.1"/><text x="992.3" y="533" font-size="11.5" fill="#eee" text-anchor="middle">0</text><path d="M987.5 516.2H992" stroke="#b0b0b0" stroke-width="1.1"/><text x="986.5" y="520.7" font-size="11.5" fill="#eee" text-anchor="end">0</text><path d="M1033.6 516V521" stroke="#b0b0b0" stroke-width="1.1"/><text x="1033.9" y="533" font-size="11.5" fill="#eee" text-anchor="middle">0.05</text><path d="M987.5 485.3H992" stroke="#b0b0b0" stroke-width="1.1"/><text x="986.5" y="489.8" font-size="11.5" fill="#eee" text-anchor="end">0.05</text><path d="M1075.1 516V521" stroke="#b0b0b0" stroke-width="1.1"/><text x="1075.4" y="533" font-size="11.5" fill="#eee" text-anchor="middle">0.1</text><path d="M987.5 453.2H992" stroke="#b0b0b0" stroke-width="1.1"/><text x="986.5" y="457.7" font-size="11.5" fill="#eee" text-anchor="end">0.1</text><path d="M1116.7 516V521" stroke="#b0b0b0" stroke-width="1.1"/><text x="1117.0" y="533" font-size="11.5" fill="#eee" text-anchor="middle">0.15</text><path d="M987.5 421.2H992" stroke="#b0b0b0" stroke-width="1.1"/><text x="986.5" y="425.7" font-size="11.5" fill="#eee" text-anchor="end">0.15</text><path d="M1158.3 516V521" stroke="#b0b0b0" stroke-width="1.1"/><text x="1158.6" y="533" font-size="11.5" fill="#eee" text-anchor="middle">0.2</text><path d="M987.5 389.1H992" stroke="#b0b0b0" stroke-width="1.1"/><text x="986.5" y="393.6" font-size="11.5" fill="#eee" text-anchor="end">0.2</text><path d="M1199.8 516V521" stroke="#b0b0b0" stroke-width="1.1"/><text x="1200.1" y="533" font-size="11.5" fill="#eee" text-anchor="middle">0.25</text><path d="M987.5 357.0H992" stroke="#b0b0b0" stroke-width="1.1"/><text x="986.5" y="361.5" font-size="11.5" fill="#eee" text-anchor="end">0.25</text><path d="M1241.4 516V521" stroke="#b0b0b0" stroke-width="1.1"/><text x="1241.7" y="533" font-size="11.5" fill="#eee" text-anchor="middle">0.3</text><path d="M987.5 324.9H992" stroke="#b0b0b0" stroke-width="1.1"/><text x="986.5" y="329.4" font-size="11.5" fill="#eee" text-anchor="end">0.3</text><path d="M1283.0 516V521" stroke="#b0b0b0" stroke-width="1.1"/><text x="1283.3" y="533" font-size="11.5" fill="#eee" text-anchor="middle">0.35</text><path d="M987.5 292.8H992" stroke="#b0b0b0" stroke-width="1.1"/><text x="986.5" y="297.3" font-size="11.5" fill="#eee" text-anchor="end">0.35</text><path d="M1324.5 516V521" stroke="#b0b0b0" stroke-width="1.1"/><text x="1324.8" y="533" font-size="11.5" fill="#eee" text-anchor="middle">0.4</text><path d="M987.5 260.8H992" stroke="#b0b0b0" stroke-width="1.1"/><text x="986.5" y="265.3" font-size="11.5" fill="#eee" text-anchor="end">0.4</text><path d="M1366.1 516V521" stroke="#b0b0b0" stroke-width="1.1"/><text x="1366.4" y="533" font-size="11.5" fill="#eee" text-anchor="middle">0.45</text><path d="M987.5 228.7H992" stroke="#b0b0b0" stroke-width="1.1"/><text x="986.5" y="233.2" font-size="11.5" fill="#eee" text-anchor="end">0.45</text><path d="M1407.7 516V521" stroke="#b0b0b0" stroke-width="1.1"/><text x="1408.0" y="533" font-size="11.5" fill="#eee" text-anchor="middle">0.5</text><path d="M987.5 196.6H992" stroke="#b0b0b0" stroke-width="1.1"/><text x="986.5" y="201.1" font-size="11.5" fill="#eee" text-anchor="end">0.5</text><path d="M1449.2 516V521" stroke="#b0b0b0" stroke-width="1.1"/><text x="1449.5" y="533" font-size="11.5" fill="#eee" text-anchor="middle">0.55</text><path d="M987.5 164.5H992" stroke="#b0b0b0" stroke-width="1.1"/><text x="986.5" y="169.0" font-size="11.5" fill="#eee" text-anchor="end">0.55</text><text x="1195.5" y="126.8" font-size="10.8" fill="#e8e8e8" textLength="63.5" lengthAdjust="spacingAndGlyphs">CIE 1976 u'v'</text><rect x="1361.7" y="175.1" width="10" height="10" fill="none" stroke="#fff" stroke-width="1.3"/><rect x="1090.9" y="149.7" width="10" height="10" fill="none" stroke="#fff" stroke-width="1.3"/><rect x="1132.8" y="409.2" width="10" height="10" fill="none" stroke="#fff" stroke-width="1.3"/><rect x="1102.0" y="218.4" width="10" height="10" fill="none" stroke="#fff" stroke-width="1.3"/><rect x="1240.5" y="299.0" width="10" height="10" fill="none" stroke="#fff" stroke-width="1.3"/><rect x="1156.5" y="155.9" width="10" height="10" fill="none" stroke="#fff" stroke-width="1.3"/><rect x="1151.5" y="210.1" width="10" height="10" fill="none" stroke="#000" stroke-width="1.3"/><circle cx="1154.9" cy="221.5" r="3.2" fill="#fff" stroke="#111" stroke-width="1.1"/><circle cx="1372.6" cy="178.5" r="3.2" fill="#d00000" stroke="#111" stroke-width="1.1"/><circle cx="1095.9" cy="154.2" r="3.2" fill="#00b000" stroke="#111" stroke-width="1.1"/><circle cx="1139.4" cy="420.6" r="3.2" fill="#0000c8" stroke="#111" stroke-width="1.1"/><circle cx="1108.9" cy="230.1" r="3.2" fill="#00b4c8" stroke="#111" stroke-width="1.1"/><circle cx="1238.1" cy="316.0" r="3.2" fill="#c000c8" stroke="#111" stroke-width="1.1"/><circle cx="1158.6" cy="160.2" r="3.2" fill="#c8c800" stroke="#111" stroke-width="1.1"/></svg>
<div class="a" style="left:1442px;top:136px;width:46.5px;height:19px;background:linear-gradient(180deg,#6a6a6a,#4c4c4c);border:1px solid #3a3a3a"></div>
<div class="a" style="left:1476px;top:143px;width:0;height:0;border-left:4px solid transparent;border-right:4px solid transparent;border-top:4.500px solid #111"></div>
<div class="a" style="left:1288px;top:491px;width:204px;height:25px;background:#333"></div>
<svg style="left:0;top:0" width="1500" height="806" viewBox="0 0 1500 806"><text x="1345.3" y="151.5" font-size="12.3" fill="#fff" textLength="90.0" lengthAdjust="spacingAndGlyphs">Gamut coverage:</text><text x="1445.3" y="151.5" font-size="12.3" fill="#fff" textLength="21.0" lengthAdjust="spacingAndGlyphs">u'v'</text><text x="1291.7" y="507.6" font-size="16.2" fill="#fff" textLength="175.0" lengthAdjust="spacingAndGlyphs" xml:space="preserve" class="hv">Gamut Coverage:  99.5%</text></svg>
<div class="a" style="left:693px;top:568px;width:267px;height:154px;background:#fff">
<div class="a" style="left:0;top:0px;width:267px;height:2px;background:linear-gradient(90deg,#85ffcf 0.5px,#c0ffcd 106.5px,#ffffca 207.5px,#ffdcae 266.5px)"></div>
<div class="a" style="left:0;top:2px;width:267px;height:2px;background:linear-gradient(90deg,#86ffd1 0.5px,#c1ffce 105.5px,#ffc 205.5px,#ffdbae 266.5px)"></div>
<div class="a" style="left:0;top:4px;width:267px;height:2px;background:linear-gradient(90deg,#87ffd2 0.5px,#c1ffcf 104.5px,#ffffcd 203.5px,#ffdaae 266.5px)"></div>
<div class="a" style="left:0;top:6px;width:267px;height:2px;background:linear-gradient(90deg,#88ffd3 0.5px,#c2ffd1 103.5px,#ffffce 201.5px,#ffd9ae 266.5px)"></div>
<div class="a" style="left:0;top:8px;width:267px;height:2px;background:linear-gradient(90deg,#88ffd4 0.5px,#c2ffd2 102.5px,#ffffd0 199.5px,#ffd8ae 266.5px)"></div>
<div class="a" style="left:0;top:10px;width:267px;height:2px;background:linear-gradient(90deg,#89ffd5 0.5px,#c3ffd3 101.5px,#ffffd1 197.5px,#ffd7af 266.5px)"></div>
<div class="a" style="left:0;top:12px;width:267px;height:2px;background:linear-gradient(90deg,#8affd6 0.5px,#c3ffd4 100.5px,#ffffd2 195.5px,#ffd6af 266.5px)"></div>
<div class="a" style="left:0;top:14px;width:267px;height:2px;background:linear-gradient(90deg,#8bffd8 0.5px,#c4ffd6 99.5px,#ffffd4 193.5px,#ffd5af 266.5px)"></div>
<div class="a" style="left:0;top:16px;width:267px;height:2px;background:linear-gradient(90deg,#8cffd9 0.5px,#c4ffd7 98.5px,#ffffd5 191.5px,#ffd4af 266.5px)"></div>
<div class="a" style="left:0;top:18px;width:267px;height:2px;background:linear-gradient(90deg,#8dffda 0.5px,#c4ffd8 97.5px,#ffffd6 189.5px,#ffd3b0 266.5px)"></div>
<div class="a" style="left:0;top:20px;width:267px;height:2px;background:linear-gradient(90deg,#8effdb 0.5px,#c5ffd9 96.5px,#ffffd8 187.5px,#ffd2b0 266.5px)"></div>
<div class="a" style="left:0;top:22px;width:267px;height:2px;background:linear-gradient(90deg,#8effdc 0.5px,#c5ffdb 95.5px,#ffffd9 185.5px,#ffd1b0 266.5px)"></div>
<div class="a" style="left:0;top:24px;width:267px;height:2px;background:linear-gradient(90deg,#8fffdd 0.5px,#c6ffdc 94.5px,#ffffda 183.5px,#ffcfb0 266.5px)"></div>
<div class="a" style="left:0;top:26px;width:267px;height:2px;background:linear-gradient(90deg,#90ffdf 0.5px,#c6ffdd 93.5px,#ffffdc 181.5px,#ffceb0 266.5px)"></div>
<div class="a" style="left:0;top:28px;width:267px;height:2px;background:linear-gradient(90deg,#91ffe0 0.5px,#c7ffde 92.5px,#ffd 179.5px,#ffcdb1 266.5px)"></div>
<div class="a" style="left:0;top:30px;width:267px;height:2px;background:linear-gradient(90deg,#92ffe1 0.5px,#c7ffe0 91.5px,#ffffde 177.5px,#ffccb1 266.5px)"></div>
<div class="a" style="left:0;top:32px;width:267px;height:2px;background:linear-gradient(90deg,#93ffe2 0.5px,#c8ffe1 90.5px,#ffffe0 175.5px,#ffcbb1 266.5px)"></div>
<div class="a" style="left:0;top:34px;width:267px;height:2px;background:linear-gradient(90deg,#94ffe4 0.5px,#c8ffe2 89.5px,#ffffe1 173.5px,#ffcab1 266.5px)"></div>
<div class="a" style="left:0;top:36px;width:267px;height:2px;background:linear-gradient(90deg,#95ffe5 0.5px,#ffffe3 171.5px,#ffc9b1 266.5px)"></div>
<div class="a" style="left:0;top:38px;width:267px;height:2px;background:linear-gradient(90deg,#96ffe6 0.5px,#ffffe4 169.5px,#ffc8b2 266.5px)"></div>
<div class="a" style="left:0;top:40px;width:267px;height:2px;background:linear-gradient(90deg,#96ffe7 0.5px,#ffffe5 167.5px,#ffe1ca 215.5px,#ffc7b2 266.5px)"></div>
<div class="a" style="left:0;top:42px;width:267px;height:2px;background:linear-gradient(90deg,#97ffe9 0.5px,#ffffe7 165.5px,#ffe1cb 214.5px,#ffc6b2 266.5px)"></div>
<div class="a" style="left:0;top:44px;width:267px;height:2px;background:linear-gradient(90deg,#98ffea 0.5px,#ffffe8 163.5px,#ffe0cb 213.5px,#ffc5b2 266.5px)"></div>
<div class="a" style="left:0;top:46px;width:267px;height:2px;background:linear-gradient(90deg,#99ffeb 0.5px,#ffffea 161.5px,#ffdfcc 212.5px,#ffc4b3 266.5px)"></div>
<div class="a" style="left:0;top:48px;width:267px;height:2px;background:linear-gradient(90deg,#9affec 0.5px,#ffffeb 159.5px,#ffdfcd 210.5px,#ffc3b3 266.5px)"></div>
<div class="a" style="left:0;top:50px;width:267px;height:2px;background:linear-gradient(90deg,#9bffee 0.5px,#ffffec 157.5px,#ffdfce 209.5px,#ffc2b3 266.5px)"></div>
<div class="a" style="left:0;top:52px;width:267px;height:2px;background:linear-gradient(90deg,#9cffef 0.5px,#ffe 155.5px,#ffdecf 208.5px,#ffc1b3 266.5px)"></div>
<div class="a" style="left:0;top:54px;width:267px;height:2px;background:linear-gradient(90deg,#9dfff0 0.5px,#ffffef 153.5px,#ffddcf 207.5px,#ffc0b3 266.5px)"></div>
<div class="a" style="left:0;top:56px;width:267px;height:2px;background:linear-gradient(90deg,#9efff2 0.5px,#fffff1 151.5px,#ffddd0 206.5px,#ffbfb4 266.5px)"></div>
<div class="a" style="left:0;top:58px;width:267px;height:2px;background:linear-gradient(90deg,#9ffff3 0.5px,#fffff2 149.5px,#ffdcd1 205.5px,#ffbeb4 266.5px)"></div>
<div class="a" style="left:0;top:60px;width:267px;height:2px;background:linear-gradient(90deg,#a0fff4 0.5px,#fffff4 147.5px,#ffdcd2 204.5px,#ffbdb4 266.5px)"></div>
<div class="a" style="left:0;top:62px;width:267px;height:2px;background:linear-gradient(90deg,#a1fff6 0.5px,#fffff5 145.5px,#ffdbd2 203.5px,#ffbcb4 266.5px)"></div>
<div class="a" style="left:0;top:64px;width:267px;height:2px;background:linear-gradient(90deg,#a2fff7 0.5px,#fffff7 143.5px,#ffdad3 202.5px,#ffbbb4 266.5px)"></div>
<div class="a" style="left:0;top:66px;width:267px;height:2px;background:linear-gradient(90deg,#a3fff9 0.5px,#fffff8 141.5px,#ffdad4 201.5px,#ffbab5 266.5px)"></div>
<div class="a" style="left:0;top:68px;width:267px;height:2px;background:linear-gradient(90deg,#a4fffa 0.5px,#fffffa 139.5px,#ffdad5 199.5px,#ffb9b5 266.5px)"></div>
<div class="a" style="left:0;top:70px;width:267px;height:2px;background:linear-gradient(90deg,#a5fffb 0.5px,#fffffb 137.5px,#ffd9d6 198.5px,#ffb8b5 266.5px)"></div>
<div class="a" style="left:0;top:72px;width:267px;height:2px;background:linear-gradient(90deg,#a6fffd 0.5px,#fffffd 135.5px,#ffd8d6 197.5px,#ffb7b5 266.5px)"></div>
<div class="a" style="left:0;top:74px;width:267px;height:2px;background:linear-gradient(90deg,#a7fffe 0.5px,#fffffe 133.5px,#ffd8d7 196.5px,#ffb6b5 266.5px)"></div>
<div class="a" style="left:0;top:76px;width:267px;height:2px;background:linear-gradient(90deg,#a8feff 0.5px,#fffeff 132.5px,#ffd7d7 196.5px,#ffb5b6 266.5px)"></div>
<div class="a" style="left:0;top:78px;width:267px;height:2px;background:linear-gradient(90deg,#a8fdff 0.5px,#fffcff 133.5px,#ffd6d8 195.5px,#ffb4b6 266.5px)"></div>
<div class="a" style="left:0;top:80px;width:267px;height:2px;background:linear-gradient(90deg,#a8fcff 0.5px,#fffbff 133.5px,#ffd5d8 195.5px,#ffb3b6 266.5px)"></div>
<div class="a" style="left:0;top:82px;width:267px;height:2px;background:linear-gradient(90deg,#a8faff 0.5px,#fffaff 133.5px,#ffd4d8 195.5px,#ffb2b6 266.5px)"></div>
<div class="a" style="left:0;top:84px;width:267px;height:2px;background:linear-gradient(90deg,#a8f9ff 0.5px,#fff8ff 133.5px,#ffd2d9 195.5px,#ffb1b6 266.5px)"></div>
<div class="a" style="left:0;top:86px;width:267px;height:2px;background:linear-gradient(90deg,#a8f7ff 0.5px,#fff7ff 133.5px,#ffd1d8 196.5px,#ffb0b7 266.5px)"></div>
<div class="a" style="left:0;top:88px;width:267px;height:2px;background:linear-gradient(90deg,#a8f6ff 0.5px,#fff5ff 133.5px,#ffd0d8 196.5px,#ffafb7 266.5px)"></div>
<div class="a" style="left:0;top:90px;width:267px;height:2px;background:linear-gradient(90deg,#a8f5ff 0.5px,#fff3ff 134.5px,#ffced8 196.5px,#ffaeb7 266.5px)"></div>
<div class="a" style="left:0;top:92px;width:267px;height:2px;background:linear-gradient(90deg,#a8f3ff 0.5px,#fff2ff 134.5px,#ffcdd9 196.5px,#ffadb7 266.5px)"></div>
<div class="a" style="left:0;top:94px;width:267px;height:2px;background:linear-gradient(90deg,#a8f2ff 0.5px,#fff1ff 134.5px,#ffccd9 196.5px,#ffacb7 266.5px)"></div>
<div class="a" style="left:0;top:96px;width:267px;height:2px;background:linear-gradient(90deg,#a9f1ff 0.5px,#ffefff 134.5px,#ffcbd9 196.5px,#ffabb8 266.5px)"></div>
<div class="a" style="left:0;top:98px;width:267px;height:2px;background:linear-gradient(90deg,#a9efff 0.5px,#fef 134.5px,#ffcad9 196.5px,#ffaab8 266.5px)"></div>
<div class="a" style="left:0;top:100px;width:267px;height:2px;background:linear-gradient(90deg,#a9eeff 0.5px,#ffecff 134.5px,#ffc8d9 197.5px,#ffa9b8 266.5px)"></div>
<div class="a" style="left:0;top:102px;width:267px;height:2px;background:linear-gradient(90deg,#a9edff 0.5px,#ffebff 134.5px,#ffc7d9 197.5px,#ffa8b8 266.5px)"></div>
<div class="a" style="left:0;top:104px;width:267px;height:2px;background:linear-gradient(90deg,#a9ebff 0.5px,#ffe9ff 135.5px,#ffc7da 196.5px,#ffa7b8 266.5px)"></div>
<div class="a" style="left:0;top:106px;width:267px;height:2px;background:linear-gradient(90deg,#a9eaff 0.5px,#ffe8ff 135.5px,#ffc5da 196.5px,#ffa6b8 266.5px)"></div>
<div class="a" style="left:0;top:108px;width:267px;height:2px;background:linear-gradient(90deg,#a9e9ff 0.5px,#ffe7ff 135.5px,#ffc4da 196.5px,#ffa6b9 266.5px)"></div>
<div class="a" style="left:0;top:110px;width:267px;height:2px;background:linear-gradient(90deg,#a9e7ff 0.5px,#ffe5ff 135.5px,#ffc3da 197.5px,#ffa5b9 266.5px)"></div>
<div class="a" style="left:0;top:112px;width:267px;height:2px;background:linear-gradient(90deg,#a9e6ff 0.5px,#ffe4ff 135.5px,#ffc2da 197.5px,#ffa4b9 266.5px)"></div>
<div class="a" style="left:0;top:114px;width:267px;height:2px;background:linear-gradient(90deg,#a9e5ff 0.5px,#ffe2ff 135.5px,#ffc1da 197.5px,#ffa3b9 266.5px)"></div>
<div class="a" style="left:0;top:116px;width:267px;height:2px;background:linear-gradient(90deg,#a9e3ff 0.5px,#ffe1ff 136.5px,#ffbfda 197.5px,#ffa2b9 266.5px)"></div>
<div class="a" style="left:0;top:118px;width:267px;height:2px;background:linear-gradient(90deg,#aae2ff 0.5px,#ffdfff 136.5px,#ffbeda 197.5px,#ffa1ba 266.5px)"></div>
<div class="a" style="left:0;top:120px;width:267px;height:2px;background:linear-gradient(90deg,#aae1ff 0.5px,#ffdeff 136.5px,#ffbdda 197.5px,#ffa0ba 266.5px)"></div>
<div class="a" style="left:0;top:122px;width:267px;height:2px;background:linear-gradient(90deg,#aae0ff 0.5px,#fdf 136.5px,#ffbcda 197.5px,#ff9fba 266.5px)"></div>
<div class="a" style="left:0;top:124px;width:267px;height:2px;background:linear-gradient(90deg,#aadeff 0.5px,#ffdcff 136.5px,#ffbbdb 197.5px,#ff9eba 266.5px)"></div>
<div class="a" style="left:0;top:126px;width:267px;height:2px;background:linear-gradient(90deg,#adf 0.5px,#ffdaff 136.5px,#ffbada 198.5px,#ff9dba 266.5px)"></div>
<div class="a" style="left:0;top:128px;width:267px;height:2px;background:linear-gradient(90deg,#aadcff 0.5px,#ffd9ff 136.5px,#ffb8da 198.5px,#ff9cbb 266.5px)"></div>
<div class="a" style="left:0;top:130px;width:267px;height:2px;background:linear-gradient(90deg,#aadaff 0.5px,#ffd7ff 137.5px,#ffb7db 198.5px,#ff9bbb 266.5px)"></div>
<div class="a" style="left:0;top:132px;width:267px;height:2px;background:linear-gradient(90deg,#aad9ff 0.5px,#ffd6ff 137.5px,#ffb6db 198.5px,#ff9bbb 266.5px)"></div>
<div class="a" style="left:0;top:134px;width:267px;height:2px;background:linear-gradient(90deg,#aad8ff 0.5px,#ffd5ff 137.5px,#ffb5db 198.5px,#ff9abb 266.5px)"></div>
<div class="a" style="left:0;top:136px;width:267px;height:2px;background:linear-gradient(90deg,#aad7ff 0.5px,#ffd3ff 137.5px,#ffb4db 198.5px,#f9b 266.5px)"></div>
<div class="a" style="left:0;top:138px;width:267px;height:2px;background:linear-gradient(90deg,#aad5ff 0.5px,#ffd2ff 137.5px,#ffb3db 198.5px,#ff98bb 266.5px)"></div>
<div class="a" style="left:0;top:140px;width:267px;height:2px;background:linear-gradient(90deg,#abd4ff 0.5px,#ffd1ff 137.5px,#ffb2db 199.5px,#ff97bc 266.5px)"></div>
<div class="a" style="left:0;top:142px;width:267px;height:2px;background:linear-gradient(90deg,#abd3ff 0.5px,#ffcfff 138.5px,#ffb1db 198.5px,#ff96bc 266.5px)"></div>
<div class="a" style="left:0;top:144px;width:267px;height:2px;background:linear-gradient(90deg,#abd2ff 0.5px,#ffceff 138.5px,#ffb0dc 198.5px,#ff95bc 266.5px)"></div>
<div class="a" style="left:0;top:146px;width:267px;height:2px;background:linear-gradient(90deg,#abd1ff 0.5px,#ffcdff 138.5px,#ffafdc 198.5px,#ff94bc 266.5px)"></div>
<div class="a" style="left:0;top:148px;width:267px;height:2px;background:linear-gradient(90deg,#abcfff 0.5px,#fcf 138.5px,#ffaedc 198.5px,#ff93bc 266.5px)"></div>
<div class="a" style="left:0;top:150px;width:267px;height:2px;background:linear-gradient(90deg,#abceff 0.5px,#ffcaff 138.5px,#ffaddc 199.5px,#ff93bd 266.5px)"></div>
<div class="a" style="left:0;top:152px;width:267px;height:2px;background:linear-gradient(90deg,#abcdff 0.5px,#ffc9ff 138.5px,#ffacdc 199.5px,#ff92bd 266.5px)"></div>
</div>
<svg style="left:0;top:0" width="1500" height="806" viewBox="0 0 1500 806"><text x="796.8" y="563.3" font-size="10.8" fill="#e8e8e8" textLength="59.0" lengthAdjust="spacingAndGlyphs">CIE 1931 xy</text><rect x="820.5" y="638.5" width="10.5" height="10.5" fill="#fff" stroke="#111" stroke-width="1.6"/><circle cx="768.6" cy="690.8" r="3.3" fill="#fff" stroke="#222" stroke-width="1"/><circle cx="767.3" cy="690" r="3.3" fill="#fff" stroke="#222" stroke-width="1"/></svg><div class="a" style="left:974px;top:556px;width:503px;height:172px;background:#444;box-shadow:0 0 0 2.500px #242424"></div>
<div class="a" style="left:974px;top:556px;width:503px;height:26px;background:linear-gradient(180deg,#333 0%,#2c2c2c 50%,#181818 52%,#141414 100%)"></div>
<div class="a" style="left:974px;top:582.0px;width:503px;height:23.5px;background:#484848"></div>
<div class="a" style="left:974px;top:605.5px;width:503px;height:24.5px;background:#787878"></div>
<div class="a" style="left:974px;top:630.0px;width:503px;height:24.5px;background:#484848"></div>
<div class="a" style="left:974px;top:654.5px;width:503px;height:24.5px;background:#787878"></div>
<div class="a" style="left:974px;top:679.0px;width:503px;height:24.5px;background:#484848"></div>
<div class="a" style="left:974px;top:703.5px;width:503px;height:24.5px;background:#787878"></div>
<div class="a" style="left:195px;top:740px;width:1301px;height:66px;background:#333"></div><div class="a" style="left:195px;top:740px;width:2px;height:66px;background:#2c2c2c"></div>
<div class="a" style="left:196.0px;top:745px;width:121px;height:62px;background:linear-gradient(180deg,#8c8c8c 0%,#777 20%,#6c6c6c 60%,#555 100%);border:1px solid #999;border-bottom:none;border-radius:4px 4px 0 0"></div>
<div class="a" style="left:201.0px;top:750px;width:111px;height:35px;background:#c0c0c0;border-radius:3px;box-shadow:inset 0 1px 2px rgba(0,0,0,.35)"></div>
<div class="a" style="left:319.7px;top:745px;width:121px;height:62px;background:linear-gradient(180deg,#8c8c8c 0%,#777 20%,#6c6c6c 60%,#555 100%);border:1px solid #999;border-bottom:none;border-radius:4px 4px 0 0"></div>
<div class="a" style="left:324.7px;top:750px;width:111px;height:35px;background:#c00000;border-radius:3px;box-shadow:inset 0 1px 2px rgba(0,0,0,.35)"></div>
<div class="a" style="left:443.4px;top:745px;width:121px;height:62px;background:linear-gradient(180deg,#8c8c8c 0%,#777 20%,#6c6c6c 60%,#555 100%);border:1px solid #999;border-bottom:none;border-radius:4px 4px 0 0"></div>
<div class="a" style="left:448.4px;top:750px;width:111px;height:35px;background:#00c000;border-radius:3px;box-shadow:inset 0 1px 2px rgba(0,0,0,.35)"></div>
<div class="a" style="left:567.1px;top:745px;width:121px;height:62px;background:linear-gradient(180deg,#8c8c8c 0%,#777 20%,#6c6c6c 60%,#555 100%);border:1px solid #999;border-bottom:none;border-radius:4px 4px 0 0"></div>
<div class="a" style="left:572.1px;top:750px;width:111px;height:35px;background:#0000c0;border-radius:3px;box-shadow:inset 0 1px 2px rgba(0,0,0,.35)"></div>
<div class="a" style="left:690.8px;top:745px;width:121px;height:62px;background:linear-gradient(180deg,#8c8c8c 0%,#777 20%,#6c6c6c 60%,#555 100%);border:1px solid #999;border-bottom:none;border-radius:4px 4px 0 0"></div>
<div class="a" style="left:695.8px;top:750px;width:111px;height:35px;background:#00c0c0;border-radius:3px;box-shadow:inset 0 1px 2px rgba(0,0,0,.35)"></div>
<div class="a" style="left:814.5px;top:745px;width:121px;height:62px;background:linear-gradient(180deg,#8c8c8c 0%,#777 20%,#6c6c6c 60%,#555 100%);border:1px solid #999;border-bottom:none;border-radius:4px 4px 0 0"></div>
<div class="a" style="left:819.5px;top:750px;width:111px;height:35px;background:#c000c0;border-radius:3px;box-shadow:inset 0 1px 2px rgba(0,0,0,.35)"></div>
<div class="a" style="left:938.2px;top:745px;width:121px;height:62px;background:linear-gradient(180deg,#8c8c8c 0%,#777 20%,#6c6c6c 60%,#555 100%);border:1px solid #999;border-bottom:none;border-radius:4px 4px 0 0"></div>
<div class="a" style="left:943.2px;top:750px;width:111px;height:35px;background:#c0c000;border-radius:3px;box-shadow:inset 0 1px 2px rgba(0,0,0,.35)"></div>
<div class="a" style="left:1061.9px;top:745px;width:121px;height:62px;background:linear-gradient(180deg,#1e1e1e 0%,#262626 60%,#3a3a3a 100%);border-radius:4px 4px 0 0"></div>
<div class="a" style="left:1066.9px;top:750px;width:111px;height:35px;background:#fff;border-radius:3px;box-shadow:inset 0 1px 2px rgba(0,0,0,.35)"></div>
<div class="a" style="left:1185px;top:745px;width:47px;height:18px;background:linear-gradient(180deg,#8e8e8e 0%,#7c7c7c 45%,#6a6a6a 55%,#606060 100%);border:1px solid #999;border-radius:4px 0 0 0"></div>
<div class="a" style="left:1185px;top:763px;width:47px;height:44px;background:linear-gradient(180deg,#8e8e8e 0%,#7c7c7c 45%,#6a6a6a 55%,#606060 100%);border:1px solid #999"></div>
<svg style="left:1185px;top:745px" width="47" height="61" viewBox="0 0 47 61"><ellipse cx="23.5" cy="8" rx="8" ry="5.5" fill="#777"/><path d="M19.5 10l4-4 4 4z" fill="#333"/><rect x="8.5" y="24.5" width="30" height="29" rx="4" fill="#8a8a8a" stroke="#1a1a1a" stroke-width="1.6"/><rect x="17" y="32.5" width="13.5" height="13.5" fill="#000"/></svg>
<div class="a" style="left:1232.7px;top:745px;width:45.1px;height:29.5px;background:linear-gradient(180deg,#8e8e8e 0%,#7c7c7c 45%,#6a6a6a 55%,#606060 100%);border:1px solid #8e8e8e;border-right-color:#333"></div>
<div class="a" style="left:1277.8px;top:745px;width:44.5px;height:29.5px;background:linear-gradient(180deg,#8e8e8e 0%,#7c7c7c 45%,#6a6a6a 55%,#606060 100%);border:1px solid #8e8e8e;border-right-color:#333"></div>
<div class="a" style="left:1322.3px;top:745px;width:44.0px;height:29.5px;background:linear-gradient(180deg,#8e8e8e 0%,#7c7c7c 45%,#6a6a6a 55%,#606060 100%);border:1px solid #8e8e8e;border-right-color:#333"></div>
<div class="a" style="left:1366.3px;top:745px;width:44.2px;height:29.5px;background:linear-gradient(180deg,#8e8e8e 0%,#7c7c7c 45%,#6a6a6a 55%,#606060 100%);border:1px solid #8e8e8e;border-right-color:#333"></div>
<div class="a" style="left:1410.5px;top:745px;width:43.3px;height:29.5px;background:linear-gradient(180deg,#8e8e8e 0%,#7c7c7c 45%,#6a6a6a 55%,#606060 100%);border:1px solid #8e8e8e;border-right-color:#333"></div>
<div class="a" style="left:1232.7px;top:775.5px;width:133.6px;height:32px;background:linear-gradient(180deg,#8e8e8e 0%,#7c7c7c 45%,#6a6a6a 55%,#606060 100%);border:1px solid #909090;border-right-color:#333"></div>
<div class="a" style="left:1366.3px;top:775.5px;width:135px;height:32px;background:linear-gradient(180deg,#8e8e8e 0%,#7c7c7c 45%,#6a6a6a 55%,#606060 100%);border:1px solid #909090"></div>
<svg style="left:0;top:0" width="1500" height="806" viewBox="0 0 1500 806"><circle cx="1255.2" cy="759.5" r="9" fill="#868686"/><g transform="translate(1255.2 759.5)"><rect x="-3.5" y="-3.5" width="7" height="7" fill="#333"/></g><circle cx="1300.0" cy="759.5" r="9" fill="#868686"/><g transform="translate(1300.0 759.5)"><path d="M-3 -4.5v9l7-4.5z" fill="#333"/></g><circle cx="1344.3" cy="759.5" r="9" fill="#868686"/><g transform="translate(1344.3 759.5)"><path d="M-4 -5.5v11M4 -5.5v11M-4 0h8" stroke="#444" stroke-width="1.8" fill="none"/></g><circle cx="1388.4" cy="759.5" r="9" fill="#868686"/><g transform="translate(1388.4 759.5)"><path d="M0 0c-1.5-2.5-5-2.5-5 0s3.500 2.5 5 0c1.500-2.500 5-2.500 5 0s-3.500 2.500-5 0z" stroke="#444" stroke-width="1.6" fill="none"/></g><circle cx="1432.2" cy="759.5" r="9" fill="#868686"/><g transform="translate(1432.2 759.5)"><path d="M-4 -1a4 4 0 0 1 7-2M4 1a4 4 0 0 1-7 2" stroke="#444" stroke-width="2" fill="none"/></g><circle cx="1263" cy="791" r="9" fill="#888"/><path d="M1262 786.500l-4 4.500 4 4.500M1267 786.500l-4 4.500 4 4.500" stroke="#555" stroke-width="1.6" fill="none"/><circle cx="1473" cy="791" r="9" fill="#888"/><path d="M1470 786.500l4 4.500-4 4.500M1475 786.500l4 4.500-4 4.500" stroke="#555" stroke-width="1.6" fill="none"/></svg>
<svg style="left:0;top:0" width="1500" height="806" viewBox="0 0 1500 806"><text x="1056.5" y="574.2" font-size="15" fill="#fff" textLength="33.9" lengthAdjust="spacingAndGlyphs" class="hv">White</text><text x="1116.2" y="574.2" font-size="15" fill="#fff" textLength="21.3" lengthAdjust="spacingAndGlyphs" class="hv">Red</text><text x="1163.3" y="574.2" font-size="15" fill="#fff" textLength="33.9" lengthAdjust="spacingAndGlyphs" class="hv">Green</text><text x="1218.1" y="574.2" font-size="15" fill="#fff" textLength="24.7" lengthAdjust="spacingAndGlyphs" class="hv">Blue</text><text x="1266.3" y="574.2" font-size="15" fill="#fff" textLength="27.6" lengthAdjust="spacingAndGlyphs" class="hv">Cyan</text><text x="1310.3" y="574.2" font-size="15" fill="#fff" textLength="48.8" lengthAdjust="spacingAndGlyphs" class="hv">Magenta</text><text x="1371.4" y="574.2" font-size="15" fill="#fff" textLength="35.5" lengthAdjust="spacingAndGlyphs" class="hv">Yellow</text><text x="1430.4" y="574.2" font-size="15" fill="#fff" textLength="32.2" lengthAdjust="spacingAndGlyphs" class="hv">100W</text><text x="984.3" y="599.4" font-size="15" fill="#fff" font-weight="bold" textLength="49.4" lengthAdjust="spacingAndGlyphs" class="hv">x: CIE31</text><text x="1049.6" y="599.4" font-size="15" fill="#f8f8f8" textLength="39.2" lengthAdjust="spacingAndGlyphs" class="hv">0.3020</text><text x="1103.1" y="599.4" font-size="15" fill="#f8f8f8" textLength="39.2" lengthAdjust="spacingAndGlyphs" class="hv">0.6498</text><text x="1156.4" y="599.4" font-size="15" fill="#f8f8f8" textLength="39.2" lengthAdjust="spacingAndGlyphs" class="hv">0.3012</text><text x="1210.0" y="599.4" font-size="15" fill="#f8f8f8" textLength="39.2" lengthAdjust="spacingAndGlyphs" class="hv">0.1492</text><text x="1256.6" y="599.4" font-size="15" fill="#f8f8f8" textLength="39.2" lengthAdjust="spacingAndGlyphs" class="hv">0.2211</text><text x="1310.3" y="599.4" font-size="15" fill="#f8f8f8" textLength="39.2" lengthAdjust="spacingAndGlyphs" class="hv">0.3027</text><text x="1366.1" y="599.4" font-size="15" fill="#f8f8f8" textLength="39.2" lengthAdjust="spacingAndGlyphs" class="hv">0.4157</text><text x="1419.3" y="599.4" font-size="15" fill="#f8f8f8" textLength="39.2" lengthAdjust="spacingAndGlyphs" class="hv">0.3015</text><text x="984.3" y="623.6" font-size="15" fill="#fff" font-weight="bold" textLength="49.4" lengthAdjust="spacingAndGlyphs" class="hv">y: CIE31</text><text x="1049.6" y="623.6" font-size="15" fill="#f8f8f8" textLength="39.2" lengthAdjust="spacingAndGlyphs" class="hv">0.3139</text><text x="1103.1" y="623.6" font-size="15" fill="#f8f8f8" textLength="39.2" lengthAdjust="spacingAndGlyphs" class="hv">0.3314</text><text x="1156.4" y="623.6" font-size="15" fill="#f8f8f8" textLength="39.2" lengthAdjust="spacingAndGlyphs" class="hv">0.6032</text><text x="1210.0" y="623.6" font-size="15" fill="#f8f8f8" textLength="39.2" lengthAdjust="spacingAndGlyphs" class="hv">0.0553</text><text x="1256.6" y="623.6" font-size="15" fill="#f8f8f8" textLength="39.2" lengthAdjust="spacingAndGlyphs" class="hv">0.3110</text><text x="1310.3" y="623.6" font-size="15" fill="#f8f8f8" textLength="39.2" lengthAdjust="spacingAndGlyphs" class="hv">0.1413</text><text x="1366.1" y="623.6" font-size="15" fill="#f8f8f8" textLength="39.2" lengthAdjust="spacingAndGlyphs" class="hv">0.5107</text><text x="1419.3" y="623.6" font-size="15" fill="#f8f8f8" textLength="39.2" lengthAdjust="spacingAndGlyphs" class="hv">0.3142</text><text x="984.3" y="648.3" font-size="15" fill="#fff" font-weight="bold" textLength="8.3" lengthAdjust="spacingAndGlyphs" class="hv">Y</text><text x="1049.6" y="648.3" font-size="15" fill="#f8f8f8" textLength="46.4" lengthAdjust="spacingAndGlyphs" class="hv">49.6992</text><text x="1103.1" y="648.3" font-size="15" fill="#f8f8f8" textLength="39.2" lengthAdjust="spacingAndGlyphs" class="hv">9.7649</text><text x="1156.4" y="648.3" font-size="15" fill="#f8f8f8" textLength="46.4" lengthAdjust="spacingAndGlyphs" class="hv">35.6125</text><text x="1210.0" y="648.3" font-size="15" fill="#f8f8f8" textLength="39.2" lengthAdjust="spacingAndGlyphs" class="hv">3.7015</text><text x="1256.6" y="648.3" font-size="15" fill="#f8f8f8" textLength="46.4" lengthAdjust="spacingAndGlyphs" class="hv">39.8509</text><text x="1310.3" y="648.3" font-size="15" fill="#f8f8f8" textLength="46.4" lengthAdjust="spacingAndGlyphs" class="hv">14.0536</text><text x="1366.1" y="648.3" font-size="15" fill="#f8f8f8" textLength="46.4" lengthAdjust="spacingAndGlyphs" class="hv">46.1256</text><text x="1419.3" y="648.3" font-size="15" fill="#f8f8f8" textLength="46.4" lengthAdjust="spacingAndGlyphs" class="hv">96.7088</text><text x="984.3" y="672.8" font-size="15" fill="#fff" font-weight="bold" textLength="51.0" lengthAdjust="spacingAndGlyphs" class="hv">Target Y</text><text x="1049.6" y="672.8" font-size="15" fill="#f8f8f8" textLength="46.4" lengthAdjust="spacingAndGlyphs" class="hv">51.2096</text><text x="1103.1" y="672.8" font-size="15" fill="#f8f8f8" textLength="46.4" lengthAdjust="spacingAndGlyphs" class="hv">10.8900</text><text x="1156.4" y="672.8" font-size="15" fill="#f8f8f8" textLength="46.4" lengthAdjust="spacingAndGlyphs" class="hv">36.6229</text><text x="1210.0" y="672.8" font-size="15" fill="#f8f8f8" textLength="39.2" lengthAdjust="spacingAndGlyphs" class="hv">3.6966</text><text x="1256.6" y="672.8" font-size="15" fill="#f8f8f8" textLength="46.4" lengthAdjust="spacingAndGlyphs" class="hv">40.3195</text><text x="1310.3" y="672.8" font-size="15" fill="#f8f8f8" textLength="46.4" lengthAdjust="spacingAndGlyphs" class="hv">14.5866</text><text x="1366.1" y="672.8" font-size="15" fill="#f8f8f8" textLength="46.4" lengthAdjust="spacingAndGlyphs" class="hv">47.5130</text><text x="1419.3" y="672.8" font-size="15" fill="#f8f8f8" textLength="46.4" lengthAdjust="spacingAndGlyphs" class="hv">96.7088</text><text x="984.3" y="696.8" font-size="15" fill="#fff" font-weight="bold" textLength="51.0" lengthAdjust="spacingAndGlyphs" class="hv">ΔE 2000</text><text x="1049.6" y="696.8" font-size="15" fill="#f8f8f8" textLength="39.2" lengthAdjust="spacingAndGlyphs" class="hv">5.9495</text><text x="1103.1" y="696.8" font-size="15" fill="#f8f8f8" textLength="39.2" lengthAdjust="spacingAndGlyphs" class="hv">2.3791</text><text x="1156.4" y="696.8" font-size="15" fill="#f8f8f8" textLength="39.2" lengthAdjust="spacingAndGlyphs" class="hv">0.6828</text><text x="1210.0" y="696.8" font-size="15" fill="#f8f8f8" textLength="39.2" lengthAdjust="spacingAndGlyphs" class="hv">1.4171</text><text x="1256.6" y="696.8" font-size="15" fill="#f8f8f8" textLength="39.2" lengthAdjust="spacingAndGlyphs" class="hv">4.2810</text><text x="1310.3" y="696.8" font-size="15" fill="#f8f8f8" textLength="39.2" lengthAdjust="spacingAndGlyphs" class="hv">2.1407</text><text x="1366.1" y="696.8" font-size="15" fill="#f8f8f8" textLength="39.2" lengthAdjust="spacingAndGlyphs" class="hv">1.2978</text><text x="1419.3" y="696.8" font-size="15" fill="#f8f8f8" textLength="39.2" lengthAdjust="spacingAndGlyphs" class="hv">6.9697</text><text x="984.3" y="721.1" font-size="15" fill="#fff" font-weight="bold" textLength="41.1" lengthAdjust="spacingAndGlyphs" class="hv">ΔE ITP</text><text x="1049.6" y="721.1" font-size="15" fill="#f8f8f8" textLength="39.2" lengthAdjust="spacingAndGlyphs" class="hv">6.6764</text><text x="1103.1" y="721.1" font-size="15" fill="#f8f8f8" textLength="39.2" lengthAdjust="spacingAndGlyphs" class="hv">8.0927</text><text x="1156.4" y="721.1" font-size="15" fill="#f8f8f8" textLength="39.2" lengthAdjust="spacingAndGlyphs" class="hv">2.2312</text><text x="1210.0" y="721.1" font-size="15" fill="#f8f8f8" textLength="39.2" lengthAdjust="spacingAndGlyphs" class="hv">4.6537</text><text x="1256.6" y="721.1" font-size="15" fill="#f8f8f8" textLength="39.2" lengthAdjust="spacingAndGlyphs" class="hv">5.3938</text><text x="1310.3" y="721.1" font-size="15" fill="#f8f8f8" textLength="39.2" lengthAdjust="spacingAndGlyphs" class="hv">9.8993</text><text x="1366.1" y="721.1" font-size="15" fill="#f8f8f8" textLength="39.2" lengthAdjust="spacingAndGlyphs" class="hv">3.4708</text><text x="1419.3" y="721.1" font-size="15" fill="#f8f8f8" textLength="39.2" lengthAdjust="spacingAndGlyphs" class="hv">6.8701</text><text x="256.5" y="799.5" font-size="10.7" fill="#303030" text-anchor="middle" font-weight="bold">White</text><text x="380.2" y="799.5" font-size="10.7" fill="#303030" text-anchor="middle" font-weight="bold">Red</text><text x="503.9" y="799.5" font-size="10.7" fill="#303030" text-anchor="middle" font-weight="bold">Green</text><text x="627.6" y="799.5" font-size="10.7" fill="#303030" text-anchor="middle" font-weight="bold">Blue</text><text x="751.3" y="799.5" font-size="10.7" fill="#303030" text-anchor="middle" font-weight="bold">Cyan</text><text x="875.0" y="799.5" font-size="10.7" fill="#303030" text-anchor="middle" font-weight="bold">Magenta</text><text x="998.7" y="799.5" font-size="10.7" fill="#303030" text-anchor="middle" font-weight="bold">Yellow</text><text x="1122.4" y="799.5" font-size="10.7" fill="#fff" text-anchor="middle" font-weight="bold">100W</text><text x="1288.0" y="797.7" font-size="21.5" fill="#3c3c3c" font-weight="bold" textLength="50.5" lengthAdjust="spacingAndGlyphs">Back</text><text x="1392.8" y="797.7" font-size="21.5" fill="#3c3c3c" font-weight="bold" textLength="52.0" lengthAdjust="spacingAndGlyphs">Next</text><text x="1463.3" y="785.2" font-size="52.5" fill="#f00" font-weight="bold" style="font-family:'DejaVu Sans',sans-serif">*</text></svg>
</div>
</body></html>
